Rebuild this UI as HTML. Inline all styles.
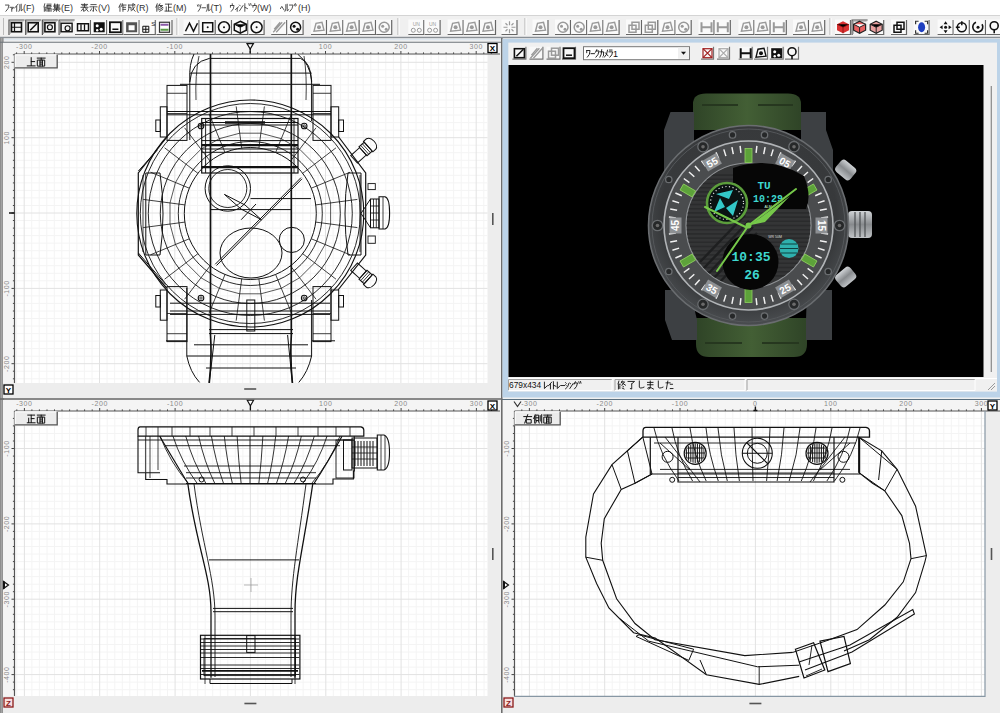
<!DOCTYPE html><html><head><meta charset="utf-8"><style>
html,body{margin:0;padding:0;width:1000px;height:713px;overflow:hidden;background:#f0f0f0;font-family:"Liberation Sans", sans-serif;}
.abs{position:absolute}
</style></head><body>
<div class="abs" style="left:0;top:0;width:1000px;height:713px;overflow:hidden">

<div class="abs" style="left:0;top:0;width:1000px;height:15px;background:#fff"></div>
<svg class="abs" style="left:0;top:0" width="1000" height="713">
<rect x="0" y="15" width="1000" height="22" fill="#f0f0f0"/>
<path d="M0.5 2.5H4.5Q4 7 1 9.5" transform="translate(5.00 2.80) scale(0.900)" stroke="#333" stroke-width="0.94" fill="none" stroke-linecap="round" stroke-linejoin="round"/><path d="M0.5 5H4.5L3 7 M2.5 6V9.5" transform="translate(9.50 2.80) scale(0.900)" stroke="#333" stroke-width="0.94" fill="none" stroke-linecap="round" stroke-linejoin="round"/><path d="M4.5 1.5L0.5 6 M3 4V9.5" transform="translate(14.00 2.80) scale(0.900)" stroke="#333" stroke-width="0.94" fill="none" stroke-linecap="round" stroke-linejoin="round"/><path d="M1.5 2V6Q1.5 8 0.5 9.5 M3 1.5V9L4.8 7.5" transform="translate(18.50 2.80) scale(0.900)" stroke="#333" stroke-width="0.94" fill="none" stroke-linecap="round" stroke-linejoin="round"/><text x="23.00" y="10.72" font-size="9" fill="#333" font-family='"Liberation Sans", sans-serif'>(F)</text>
<path d="M2 1L1 5H3.5 M1.5 6V9.5 M3 6.5V9 M4.5 1.5H9 M4.5 3H9V4.5H4.5 M4.5 3V9.5 M4.5 6H9V9.5 M6 6V9.5 M7.5 6V9.5" transform="translate(43.00 2.80) scale(0.900)" stroke="#333" stroke-width="0.94" fill="none" stroke-linecap="round" stroke-linejoin="round"/><path d="M3 1L2 4 M3 2.5V6 M3 2.5H8.5 M3 3.7H8 M3 4.9H8 M3 6H9 M1 7.2H9 M5 6V9.5 M5 7.2L1.5 9.5 M5 7.2L8.5 9.5 M6 1.5V6" transform="translate(52.00 2.80) scale(0.900)" stroke="#333" stroke-width="0.94" fill="none" stroke-linecap="round" stroke-linejoin="round"/><text x="61.00" y="10.72" font-size="9" fill="#333" font-family='"Liberation Sans", sans-serif'>(E)</text>
<path d="M1.5 1.8H8.5 M5 1V5 M2.5 3.3H7.5 M1 5H9 M4.5 5L1.5 9 M4 7V9.5L6 8.5 M5.5 5L9 9.5 M8 6.5L6.5 7.5" transform="translate(80.00 2.80) scale(0.900)" stroke="#333" stroke-width="0.94" fill="none" stroke-linecap="round" stroke-linejoin="round"/><path d="M2 2H8 M1 4.5H9 M5 4.5V9.5L4 9 M3 6.5L1.5 9 M7 6.5L8.5 9" transform="translate(89.00 2.80) scale(0.900)" stroke="#333" stroke-width="0.94" fill="none" stroke-linecap="round" stroke-linejoin="round"/><text x="98.00" y="10.72" font-size="9" fill="#333" font-family='"Liberation Sans", sans-serif'>(V)</text>
<path d="M3 1L1 5 M2.2 3.5V9.5 M5 1L4 4 M4.5 2.5H9 M5.5 2.5V9.5 M5.5 5H8.5 M5.5 7.3H8.5" transform="translate(118.00 2.80) scale(0.900)" stroke="#333" stroke-width="0.94" fill="none" stroke-linecap="round" stroke-linejoin="round"/><path d="M1.5 2.5H9 M2 2.5V6Q2 8.5 1 9.5 M2 5H4.5V8 M6.5 1V5Q7 8 9 9.5 M8.5 4.5L5 9 M7.5 1.2L8.5 2" transform="translate(127.00 2.80) scale(0.900)" stroke="#333" stroke-width="0.94" fill="none" stroke-linecap="round" stroke-linejoin="round"/><text x="136.00" y="10.72" font-size="9" fill="#333" font-family='"Liberation Sans", sans-serif'>(R)</text>
<path d="M2.5 1L1 5 M2 3.5V9.5 M3.5 2.5V8 M5.5 1L4.5 3H8.5L5 5.5 M5.5 3.5L9 5.5 M8 6L5 7.5 M8.5 7.5L5 9.5" transform="translate(155.00 2.80) scale(0.900)" stroke="#333" stroke-width="0.94" fill="none" stroke-linecap="round" stroke-linejoin="round"/><path d="M1.5 1.5H8.5 M5 1.5V9 M5 5H8 M2.5 4.5V9 M1 9.2H9" transform="translate(164.00 2.80) scale(0.900)" stroke="#333" stroke-width="0.94" fill="none" stroke-linecap="round" stroke-linejoin="round"/><text x="173.00" y="10.72" font-size="9" fill="#333" font-family='"Liberation Sans", sans-serif'>(M)</text>
<path d="M0.5 2.5L1 4 M2 2L2.5 3.5 M4.5 2Q4 7 1.5 9.5" transform="translate(197.00 2.80) scale(0.900)" stroke="#333" stroke-width="0.94" fill="none" stroke-linecap="round" stroke-linejoin="round"/><path d="M0.5 5.5H4.5" transform="translate(201.50 2.80) scale(0.900)" stroke="#333" stroke-width="0.94" fill="none" stroke-linecap="round" stroke-linejoin="round"/><path d="M1.5 2V6Q1.5 8 0.5 9.5 M3 1.5V9L4.8 7.5" transform="translate(206.00 2.80) scale(0.900)" stroke="#333" stroke-width="0.94" fill="none" stroke-linecap="round" stroke-linejoin="round"/><text x="210.50" y="10.72" font-size="9" fill="#333" font-family='"Liberation Sans", sans-serif'>(T)</text>
<path d="M2.5 1V3 M0.5 3V5 M0.5 3H4.5Q4.5 7 1.5 9.5" transform="translate(230.00 2.80) scale(0.900)" stroke="#333" stroke-width="0.94" fill="none" stroke-linecap="round" stroke-linejoin="round"/><path d="M4.5 4.5L1 7.5 M3 6V9.5" transform="translate(234.50 2.80) scale(0.900)" stroke="#333" stroke-width="0.94" fill="none" stroke-linecap="round" stroke-linejoin="round"/><path d="M0.5 2.5L1.5 3.5 M0.5 9L4.5 3" transform="translate(239.00 2.80) scale(0.900)" stroke="#333" stroke-width="0.94" fill="none" stroke-linecap="round" stroke-linejoin="round"/><path d="M1.5 1V9.5 M1.5 5L4.5 6.5" transform="translate(243.50 2.80) scale(0.900)" stroke="#333" stroke-width="0.94" fill="none" stroke-linecap="round" stroke-linejoin="round"/><path d="M1 1L1.5 3 M3 0.8L3.5 2.8" transform="translate(248.00 2.80) scale(0.900)" stroke="#333" stroke-width="0.94" fill="none" stroke-linecap="round" stroke-linejoin="round"/><path d="M2.5 1V3 M0.5 3V5 M0.5 3H4.5Q4.5 7 1.5 9.5" transform="translate(252.50 2.80) scale(0.900)" stroke="#333" stroke-width="0.94" fill="none" stroke-linecap="round" stroke-linejoin="round"/><text x="257.00" y="10.72" font-size="9" fill="#333" font-family='"Liberation Sans", sans-serif'>(W)</text>
<path d="M0.5 6.5L2 4L4.5 8" transform="translate(280.00 2.80) scale(0.900)" stroke="#333" stroke-width="0.94" fill="none" stroke-linecap="round" stroke-linejoin="round"/><path d="M1.5 2V6Q1.5 8 0.5 9.5 M3 1.5V9L4.8 7.5" transform="translate(284.50 2.80) scale(0.900)" stroke="#333" stroke-width="0.94" fill="none" stroke-linecap="round" stroke-linejoin="round"/><path d="M0.5 2.5H4.5Q4 7 1 9.5" transform="translate(289.00 2.80) scale(0.900)" stroke="#333" stroke-width="0.94" fill="none" stroke-linecap="round" stroke-linejoin="round"/><path d="M2 1.2a1.2 1.2 0 1 0 0.01 0" transform="translate(293.50 2.80) scale(0.900)" stroke="#333" stroke-width="0.94" fill="none" stroke-linecap="round" stroke-linejoin="round"/><text x="298.00" y="10.72" font-size="9" fill="#333" font-family='"Liberation Sans", sans-serif'>(H)</text>
<path d="M0 15.5H1000" stroke="#d4d4d4"/>
<path d="M0 37.5H1000" stroke="#8a9096" stroke-width="1.6"/>
<path d="M0 39.5H1000" stroke="#dfe8f0" stroke-width="1.5"/>
<rect x="0" y="38" width="3.6" height="675" fill="#8e8e8e"/>
<rect x="1.2" y="38" width="1" height="675" fill="#a8a8a8"/>
<rect x="3" y="42.5" width="497" height="355.5" fill="#ededed"/>
<rect x="3" y="42.5" width="497" height="11.5" fill="#f4f4f4"/>
<rect x="3" y="42.5" width="11.5" height="340.5" fill="#f4f4f4"/>
<rect x="14.5" y="54" width="473.0" height="329" fill="#fff"/>
<path d="M16.6 54V383M31.7 54V383M39.2 54V383M46.8 54V383M54.3 54V383M61.8 54V383M69.4 54V383M76.9 54V383M84.4 54V383M92.0 54V383M107.0 54V383M114.6 54V383M122.1 54V383M129.6 54V383M137.2 54V383M144.7 54V383M152.2 54V383M159.8 54V383M167.3 54V383M182.4 54V383M189.9 54V383M197.5 54V383M205.0 54V383M212.5 54V383M220.1 54V383M227.6 54V383M235.1 54V383M242.7 54V383M257.7 54V383M265.3 54V383M272.8 54V383M280.3 54V383M287.9 54V383M295.4 54V383M302.9 54V383M310.5 54V383M318.0 54V383M333.1 54V383M340.6 54V383M348.2 54V383M355.7 54V383M363.2 54V383M370.8 54V383M378.3 54V383M385.8 54V383M393.4 54V383M408.4 54V383M416.0 54V383M423.5 54V383M431.0 54V383M438.6 54V383M446.1 54V383M453.6 54V383M461.2 54V383M468.7 54V383M483.8 54V383M14.5 54.8H487.5M14.5 69.8H487.5M14.5 77.4H487.5M14.5 84.9H487.5M14.5 92.4H487.5M14.5 100.0H487.5M14.5 107.5H487.5M14.5 115.0H487.5M14.5 122.6H487.5M14.5 130.1H487.5M14.5 145.2H487.5M14.5 152.7H487.5M14.5 160.3H487.5M14.5 167.8H487.5M14.5 175.3H487.5M14.5 182.9H487.5M14.5 190.4H487.5M14.5 197.9H487.5M14.5 205.5H487.5M14.5 220.5H487.5M14.5 228.1H487.5M14.5 235.6H487.5M14.5 243.1H487.5M14.5 250.7H487.5M14.5 258.2H487.5M14.5 265.7H487.5M14.5 273.3H487.5M14.5 280.8H487.5M14.5 295.9H487.5M14.5 303.4H487.5M14.5 311.0H487.5M14.5 318.5H487.5M14.5 326.0H487.5M14.5 333.6H487.5M14.5 341.1H487.5M14.5 348.6H487.5M14.5 356.2H487.5M14.5 371.2H487.5M14.5 378.8H487.5" stroke="#f4f4f4" stroke-width="1" fill="none"/>
<path d="M24.2 54V383M99.5 54V383M174.8 54V383M250.2 54V383M325.5 54V383M400.9 54V383M476.2 54V383M14.5 62.3H487.5M14.5 137.7H487.5M14.5 213.0H487.5M14.5 288.4H487.5M14.5 363.7H487.5" stroke="#e2e2e2" stroke-width="1" fill="none"/>
<text x="24.2" y="48.8" font-size="7" letter-spacing="0.6" fill="#8a8a8a" text-anchor="middle" font-family='"Liberation Sans", sans-serif'>-300</text>
<text x="99.5" y="48.8" font-size="7" letter-spacing="0.6" fill="#8a8a8a" text-anchor="middle" font-family='"Liberation Sans", sans-serif'>-200</text>
<text x="174.8" y="48.8" font-size="7" letter-spacing="0.6" fill="#8a8a8a" text-anchor="middle" font-family='"Liberation Sans", sans-serif'>-100</text>
<text x="325.5" y="48.8" font-size="7" letter-spacing="0.6" fill="#8a8a8a" text-anchor="middle" font-family='"Liberation Sans", sans-serif'>100</text>
<text x="400.9" y="48.8" font-size="7" letter-spacing="0.6" fill="#8a8a8a" text-anchor="middle" font-family='"Liberation Sans", sans-serif'>200</text>
<text x="476.2" y="48.8" font-size="7" letter-spacing="0.6" fill="#8a8a8a" text-anchor="middle" font-family='"Liberation Sans", sans-serif'>300</text>
<text x="9.0" y="62.3" font-size="7" letter-spacing="0.6" fill="#8a8a8a" text-anchor="middle" font-family='"Liberation Sans", sans-serif' transform="rotate(-90 9.0 62.3)">200</text>
<text x="9.0" y="137.7" font-size="7" letter-spacing="0.6" fill="#8a8a8a" text-anchor="middle" font-family='"Liberation Sans", sans-serif' transform="rotate(-90 9.0 137.7)">100</text>
<text x="9.0" y="288.4" font-size="7" letter-spacing="0.6" fill="#8a8a8a" text-anchor="middle" font-family='"Liberation Sans", sans-serif' transform="rotate(-90 9.0 288.4)">-100</text>
<text x="9.0" y="363.7" font-size="7" letter-spacing="0.6" fill="#8a8a8a" text-anchor="middle" font-family='"Liberation Sans", sans-serif' transform="rotate(-90 9.0 363.7)">-200</text>
<path d="M16.6 52.4V54M24.2 51.0V54M31.7 52.4V54M39.2 52.4V54M46.8 52.4V54M54.3 52.4V54M61.8 52.4V54M69.4 52.4V54M76.9 52.4V54M84.4 52.4V54M92.0 52.4V54M99.5 51.0V54M107.0 52.4V54M114.6 52.4V54M122.1 52.4V54M129.6 52.4V54M137.2 52.4V54M144.7 52.4V54M152.2 52.4V54M159.8 52.4V54M167.3 52.4V54M174.8 51.0V54M182.4 52.4V54M189.9 52.4V54M197.5 52.4V54M205.0 52.4V54M212.5 52.4V54M220.1 52.4V54M227.6 52.4V54M235.1 52.4V54M242.7 52.4V54M250.2 51.0V54M257.7 52.4V54M265.3 52.4V54M272.8 52.4V54M280.3 52.4V54M287.9 52.4V54M295.4 52.4V54M302.9 52.4V54M310.5 52.4V54M318.0 52.4V54M325.5 51.0V54M333.1 52.4V54M340.6 52.4V54M348.2 52.4V54M355.7 52.4V54M363.2 52.4V54M370.8 52.4V54M378.3 52.4V54M385.8 52.4V54M393.4 52.4V54M400.9 51.0V54M408.4 52.4V54M416.0 52.4V54M423.5 52.4V54M431.0 52.4V54M438.6 52.4V54M446.1 52.4V54M453.6 52.4V54M461.2 52.4V54M468.7 52.4V54M476.2 51.0V54M483.8 52.4V54M491.3 52.4V54M12.9 54.8H14.5M11.5 62.3H14.5M12.9 69.8H14.5M12.9 77.4H14.5M12.9 84.9H14.5M12.9 92.4H14.5M12.9 100.0H14.5M12.9 107.5H14.5M12.9 115.0H14.5M12.9 122.6H14.5M12.9 130.1H14.5M11.5 137.7H14.5M12.9 145.2H14.5M12.9 152.7H14.5M12.9 160.3H14.5M12.9 167.8H14.5M12.9 175.3H14.5M12.9 182.9H14.5M12.9 190.4H14.5M12.9 197.9H14.5M12.9 205.5H14.5M11.5 213.0H14.5M12.9 220.5H14.5M12.9 228.1H14.5M12.9 235.6H14.5M12.9 243.1H14.5M12.9 250.7H14.5M12.9 258.2H14.5M12.9 265.7H14.5M12.9 273.3H14.5M12.9 280.8H14.5M11.5 288.4H14.5M12.9 295.9H14.5M12.9 303.4H14.5M12.9 311.0H14.5M12.9 318.5H14.5M12.9 326.0H14.5M12.9 333.6H14.5M12.9 341.1H14.5M12.9 348.6H14.5M12.9 356.2H14.5M11.5 363.7H14.5M12.9 371.2H14.5M12.9 378.8H14.5" stroke="#444" stroke-width="1" fill="none"/>
<path d="M14.5 54H500M14.5 54V383" stroke="#555" stroke-width="1.2" fill="none"/>
<path d="M244.2 389H256.2" stroke="#555" stroke-width="1.6"/>
<path d="M492.8 213v12" stroke="#555" stroke-width="1.6"/>
<rect x="14.7" y="54.4" width="43" height="14" fill="#ececec"/><path d="M15.2 68.4V54.9H57.7" stroke="#fff" fill="none"/><path d="M14.7 67.9H57.2V54.4" stroke="#555" stroke-width="1.3" fill="none"/><path d="M5 1V9 M5 5H8.5 M1 9.3H9" transform="translate(26.20 56.60) scale(1.000)" stroke="#111" stroke-width="1.00" fill="none" stroke-linecap="round" stroke-linejoin="round"/><path d="M1 1.5H9 M5 1.5V3.5 M1.5 3.5H8.5V9.5H1.5Z M3.8 3.5V9.5 M6.2 3.5V9.5 M3.8 5.5H6.2 M3.8 7.5H6.2" transform="translate(36.20 56.60) scale(1.000)" stroke="#111" stroke-width="1.00" fill="none" stroke-linecap="round" stroke-linejoin="round"/>
<rect x="4.0" y="385.0" width="9" height="9" fill="#fff" stroke="#000" stroke-width="1.3"/><text x="8.5" y="392.5" font-size="8" font-weight="bold" fill="#000" text-anchor="middle" font-family='"Liberation Sans", sans-serif'>Y</text>
<rect x="488.0" y="43.5" width="9" height="9" fill="#fff" stroke="#000" stroke-width="1.3"/><text x="492.5" y="51.0" font-size="8" font-weight="bold" fill="#000" text-anchor="middle" font-family='"Liberation Sans", sans-serif'>X</text>
<rect x="3" y="400" width="497" height="313" fill="#ededed"/>
<rect x="3" y="400" width="497" height="11" fill="#f4f4f4"/>
<rect x="3" y="400" width="11.5" height="296" fill="#f4f4f4"/>
<rect x="14.5" y="411" width="473.0" height="285" fill="#fff"/>
<path d="M16.8 411V696M31.9 411V696M39.4 411V696M47.0 411V696M54.5 411V696M62.0 411V696M69.6 411V696M77.1 411V696M84.6 411V696M92.2 411V696M107.2 411V696M114.8 411V696M122.3 411V696M129.8 411V696M137.4 411V696M144.9 411V696M152.4 411V696M160.0 411V696M167.5 411V696M182.6 411V696M190.1 411V696M197.7 411V696M205.2 411V696M212.7 411V696M220.3 411V696M227.8 411V696M235.3 411V696M242.9 411V696M257.9 411V696M265.5 411V696M273.0 411V696M280.5 411V696M288.1 411V696M295.6 411V696M303.1 411V696M310.7 411V696M318.2 411V696M333.3 411V696M340.8 411V696M348.4 411V696M355.9 411V696M363.4 411V696M371.0 411V696M378.5 411V696M386.0 411V696M393.6 411V696M408.6 411V696M416.2 411V696M423.7 411V696M431.2 411V696M438.8 411V696M446.3 411V696M453.8 411V696M461.4 411V696M468.9 411V696M484.0 411V696M14.5 418.4H487.5M14.5 425.9H487.5M14.5 433.5H487.5M14.5 441.0H487.5M14.5 456.1H487.5M14.5 463.6H487.5M14.5 471.2H487.5M14.5 478.7H487.5M14.5 486.2H487.5M14.5 493.8H487.5M14.5 501.3H487.5M14.5 508.8H487.5M14.5 516.4H487.5M14.5 531.4H487.5M14.5 539.0H487.5M14.5 546.5H487.5M14.5 554.0H487.5M14.5 561.6H487.5M14.5 569.1H487.5M14.5 576.6H487.5M14.5 584.2H487.5M14.5 591.7H487.5M14.5 606.8H487.5M14.5 614.3H487.5M14.5 621.9H487.5M14.5 629.4H487.5M14.5 636.9H487.5M14.5 644.5H487.5M14.5 652.0H487.5M14.5 659.5H487.5M14.5 667.1H487.5M14.5 682.1H487.5M14.5 689.7H487.5" stroke="#f4f4f4" stroke-width="1" fill="none"/>
<path d="M24.4 411V696M99.7 411V696M175.1 411V696M250.4 411V696M325.8 411V696M401.1 411V696M476.4 411V696M14.5 448.5H487.5M14.5 523.9H487.5M14.5 599.2H487.5M14.5 674.6H487.5" stroke="#e2e2e2" stroke-width="1" fill="none"/>
<text x="24.4" y="405.8" font-size="7" letter-spacing="0.6" fill="#8a8a8a" text-anchor="middle" font-family='"Liberation Sans", sans-serif'>-300</text>
<text x="99.7" y="405.8" font-size="7" letter-spacing="0.6" fill="#8a8a8a" text-anchor="middle" font-family='"Liberation Sans", sans-serif'>-200</text>
<text x="175.1" y="405.8" font-size="7" letter-spacing="0.6" fill="#8a8a8a" text-anchor="middle" font-family='"Liberation Sans", sans-serif'>-100</text>
<text x="325.8" y="405.8" font-size="7" letter-spacing="0.6" fill="#8a8a8a" text-anchor="middle" font-family='"Liberation Sans", sans-serif'>100</text>
<text x="401.1" y="405.8" font-size="7" letter-spacing="0.6" fill="#8a8a8a" text-anchor="middle" font-family='"Liberation Sans", sans-serif'>200</text>
<text x="476.4" y="405.8" font-size="7" letter-spacing="0.6" fill="#8a8a8a" text-anchor="middle" font-family='"Liberation Sans", sans-serif'>300</text>
<text x="9.0" y="448.5" font-size="7" letter-spacing="0.6" fill="#8a8a8a" text-anchor="middle" font-family='"Liberation Sans", sans-serif' transform="rotate(-90 9.0 448.5)">-100</text>
<text x="9.0" y="523.9" font-size="7" letter-spacing="0.6" fill="#8a8a8a" text-anchor="middle" font-family='"Liberation Sans", sans-serif' transform="rotate(-90 9.0 523.9)">-200</text>
<text x="9.0" y="599.2" font-size="7" letter-spacing="0.6" fill="#8a8a8a" text-anchor="middle" font-family='"Liberation Sans", sans-serif' transform="rotate(-90 9.0 599.2)">-300</text>
<text x="9.0" y="674.6" font-size="7" letter-spacing="0.6" fill="#8a8a8a" text-anchor="middle" font-family='"Liberation Sans", sans-serif' transform="rotate(-90 9.0 674.6)">-400</text>
<path d="M16.8 409.4V411M24.4 408.0V411M31.9 409.4V411M39.4 409.4V411M47.0 409.4V411M54.5 409.4V411M62.0 409.4V411M69.6 409.4V411M77.1 409.4V411M84.6 409.4V411M92.2 409.4V411M99.7 408.0V411M107.2 409.4V411M114.8 409.4V411M122.3 409.4V411M129.8 409.4V411M137.4 409.4V411M144.9 409.4V411M152.4 409.4V411M160.0 409.4V411M167.5 409.4V411M175.1 408.0V411M182.6 409.4V411M190.1 409.4V411M197.7 409.4V411M205.2 409.4V411M212.7 409.4V411M220.3 409.4V411M227.8 409.4V411M235.3 409.4V411M242.9 409.4V411M250.4 408.0V411M257.9 409.4V411M265.5 409.4V411M273.0 409.4V411M280.5 409.4V411M288.1 409.4V411M295.6 409.4V411M303.1 409.4V411M310.7 409.4V411M318.2 409.4V411M325.8 408.0V411M333.3 409.4V411M340.8 409.4V411M348.4 409.4V411M355.9 409.4V411M363.4 409.4V411M371.0 409.4V411M378.5 409.4V411M386.0 409.4V411M393.6 409.4V411M401.1 408.0V411M408.6 409.4V411M416.2 409.4V411M423.7 409.4V411M431.2 409.4V411M438.8 409.4V411M446.3 409.4V411M453.8 409.4V411M461.4 409.4V411M468.9 409.4V411M476.4 408.0V411M484.0 409.4V411M491.5 409.4V411M12.9 418.4H14.5M12.9 425.9H14.5M12.9 433.5H14.5M12.9 441.0H14.5M11.5 448.5H14.5M12.9 456.1H14.5M12.9 463.6H14.5M12.9 471.2H14.5M12.9 478.7H14.5M12.9 486.2H14.5M12.9 493.8H14.5M12.9 501.3H14.5M12.9 508.8H14.5M12.9 516.4H14.5M11.5 523.9H14.5M12.9 531.4H14.5M12.9 539.0H14.5M12.9 546.5H14.5M12.9 554.0H14.5M12.9 561.6H14.5M12.9 569.1H14.5M12.9 576.6H14.5M12.9 584.2H14.5M12.9 591.7H14.5M11.5 599.2H14.5M12.9 606.8H14.5M12.9 614.3H14.5M12.9 621.9H14.5M12.9 629.4H14.5M12.9 636.9H14.5M12.9 644.5H14.5M12.9 652.0H14.5M12.9 659.5H14.5M12.9 667.1H14.5M11.5 674.6H14.5M12.9 682.1H14.5M12.9 689.7H14.5" stroke="#444" stroke-width="1" fill="none"/>
<path d="M14.5 411H500M14.5 411V696" stroke="#555" stroke-width="1.2" fill="none"/>
<path d="M244.4 703.5H256.4" stroke="#555" stroke-width="1.6"/>
<path d="M492.8 548v12" stroke="#555" stroke-width="1.6"/>
<rect x="14.7" y="411.4" width="43" height="14" fill="#ececec"/><path d="M15.2 425.4V411.9H57.7" stroke="#fff" fill="none"/><path d="M14.7 424.9H57.2V411.4" stroke="#555" stroke-width="1.3" fill="none"/><path d="M1.5 1.5H8.5 M5 1.5V9 M5 5H8 M2.5 4.5V9 M1 9.2H9" transform="translate(26.20 413.60) scale(1.000)" stroke="#111" stroke-width="1.00" fill="none" stroke-linecap="round" stroke-linejoin="round"/><path d="M1 1.5H9 M5 1.5V3.5 M1.5 3.5H8.5V9.5H1.5Z M3.8 3.5V9.5 M6.2 3.5V9.5 M3.8 5.5H6.2 M3.8 7.5H6.2" transform="translate(36.20 413.60) scale(1.000)" stroke="#111" stroke-width="1.00" fill="none" stroke-linecap="round" stroke-linejoin="round"/>
<rect x="4.0" y="698.0" width="9" height="9" fill="#f7dede" stroke="#8b1a1a" stroke-width="1.3"/><text x="8.5" y="705.5" font-size="8" font-weight="bold" fill="#8b1a1a" text-anchor="middle" font-family='"Liberation Sans", sans-serif'>Z</text>
<rect x="488.0" y="401.0" width="9" height="9" fill="#fff" stroke="#000" stroke-width="1.3"/><text x="492.5" y="408.5" font-size="8" font-weight="bold" fill="#000" text-anchor="middle" font-family='"Liberation Sans", sans-serif'>X</text>
<rect x="503" y="400" width="497" height="313" fill="#ededed"/>
<rect x="503" y="400" width="497" height="11" fill="#f4f4f4"/>
<rect x="503" y="400" width="11.5" height="296" fill="#f4f4f4"/>
<rect x="514.5" y="411" width="470.5" height="285" fill="#fff"/>
<path d="M521.8 411V696M536.9 411V696M544.4 411V696M552.0 411V696M559.5 411V696M567.0 411V696M574.6 411V696M582.1 411V696M589.6 411V696M597.2 411V696M612.2 411V696M619.8 411V696M627.3 411V696M634.8 411V696M642.4 411V696M649.9 411V696M657.4 411V696M665.0 411V696M672.5 411V696M687.6 411V696M695.1 411V696M702.7 411V696M710.2 411V696M717.7 411V696M725.3 411V696M732.8 411V696M740.3 411V696M747.9 411V696M762.9 411V696M770.5 411V696M778.0 411V696M785.5 411V696M793.1 411V696M800.6 411V696M808.1 411V696M815.7 411V696M823.2 411V696M838.3 411V696M845.8 411V696M853.4 411V696M860.9 411V696M868.4 411V696M876.0 411V696M883.5 411V696M891.0 411V696M898.6 411V696M913.6 411V696M921.2 411V696M928.7 411V696M936.2 411V696M943.8 411V696M951.3 411V696M958.8 411V696M966.4 411V696M973.9 411V696M514.5 418.4H985M514.5 425.9H985M514.5 433.5H985M514.5 441.0H985M514.5 456.1H985M514.5 463.6H985M514.5 471.2H985M514.5 478.7H985M514.5 486.2H985M514.5 493.8H985M514.5 501.3H985M514.5 508.8H985M514.5 516.4H985M514.5 531.4H985M514.5 539.0H985M514.5 546.5H985M514.5 554.0H985M514.5 561.6H985M514.5 569.1H985M514.5 576.6H985M514.5 584.2H985M514.5 591.7H985M514.5 606.8H985M514.5 614.3H985M514.5 621.9H985M514.5 629.4H985M514.5 636.9H985M514.5 644.5H985M514.5 652.0H985M514.5 659.5H985M514.5 667.1H985M514.5 682.1H985M514.5 689.7H985" stroke="#f4f4f4" stroke-width="1" fill="none"/>
<path d="M529.4 411V696M604.7 411V696M680.0 411V696M755.4 411V696M830.8 411V696M906.1 411V696M981.4 411V696M514.5 448.5H985M514.5 523.9H985M514.5 599.2H985M514.5 674.6H985" stroke="#e2e2e2" stroke-width="1" fill="none"/>
<text x="529.4" y="405.8" font-size="7" letter-spacing="0.6" fill="#8a8a8a" text-anchor="middle" font-family='"Liberation Sans", sans-serif'>-300</text>
<text x="604.7" y="405.8" font-size="7" letter-spacing="0.6" fill="#8a8a8a" text-anchor="middle" font-family='"Liberation Sans", sans-serif'>-200</text>
<text x="680.0" y="405.8" font-size="7" letter-spacing="0.6" fill="#8a8a8a" text-anchor="middle" font-family='"Liberation Sans", sans-serif'>-100</text>
<text x="830.8" y="405.8" font-size="7" letter-spacing="0.6" fill="#8a8a8a" text-anchor="middle" font-family='"Liberation Sans", sans-serif'>100</text>
<text x="906.1" y="405.8" font-size="7" letter-spacing="0.6" fill="#8a8a8a" text-anchor="middle" font-family='"Liberation Sans", sans-serif'>200</text>
<text x="981.4" y="405.8" font-size="7" letter-spacing="0.6" fill="#8a8a8a" text-anchor="middle" font-family='"Liberation Sans", sans-serif'>300</text>
<text x="509.0" y="448.5" font-size="7" letter-spacing="0.6" fill="#8a8a8a" text-anchor="middle" font-family='"Liberation Sans", sans-serif' transform="rotate(-90 509.0 448.5)">-100</text>
<text x="509.0" y="523.9" font-size="7" letter-spacing="0.6" fill="#8a8a8a" text-anchor="middle" font-family='"Liberation Sans", sans-serif' transform="rotate(-90 509.0 523.9)">-200</text>
<text x="509.0" y="599.2" font-size="7" letter-spacing="0.6" fill="#8a8a8a" text-anchor="middle" font-family='"Liberation Sans", sans-serif' transform="rotate(-90 509.0 599.2)">-300</text>
<text x="509.0" y="674.6" font-size="7" letter-spacing="0.6" fill="#8a8a8a" text-anchor="middle" font-family='"Liberation Sans", sans-serif' transform="rotate(-90 509.0 674.6)">-400</text>
<path d="M521.8 409.4V411M529.4 408.0V411M536.9 409.4V411M544.4 409.4V411M552.0 409.4V411M559.5 409.4V411M567.0 409.4V411M574.6 409.4V411M582.1 409.4V411M589.6 409.4V411M597.2 409.4V411M604.7 408.0V411M612.2 409.4V411M619.8 409.4V411M627.3 409.4V411M634.8 409.4V411M642.4 409.4V411M649.9 409.4V411M657.4 409.4V411M665.0 409.4V411M672.5 409.4V411M680.0 408.0V411M687.6 409.4V411M695.1 409.4V411M702.7 409.4V411M710.2 409.4V411M717.7 409.4V411M725.3 409.4V411M732.8 409.4V411M740.3 409.4V411M747.9 409.4V411M755.4 408.0V411M762.9 409.4V411M770.5 409.4V411M778.0 409.4V411M785.5 409.4V411M793.1 409.4V411M800.6 409.4V411M808.1 409.4V411M815.7 409.4V411M823.2 409.4V411M830.8 408.0V411M838.3 409.4V411M845.8 409.4V411M853.4 409.4V411M860.9 409.4V411M868.4 409.4V411M876.0 409.4V411M883.5 409.4V411M891.0 409.4V411M898.6 409.4V411M906.1 408.0V411M913.6 409.4V411M921.2 409.4V411M928.7 409.4V411M936.2 409.4V411M943.8 409.4V411M951.3 409.4V411M958.8 409.4V411M966.4 409.4V411M973.9 409.4V411M981.4 408.0V411M989.0 409.4V411M512.9 418.4H514.5M512.9 425.9H514.5M512.9 433.5H514.5M512.9 441.0H514.5M511.5 448.5H514.5M512.9 456.1H514.5M512.9 463.6H514.5M512.9 471.2H514.5M512.9 478.7H514.5M512.9 486.2H514.5M512.9 493.8H514.5M512.9 501.3H514.5M512.9 508.8H514.5M512.9 516.4H514.5M511.5 523.9H514.5M512.9 531.4H514.5M512.9 539.0H514.5M512.9 546.5H514.5M512.9 554.0H514.5M512.9 561.6H514.5M512.9 569.1H514.5M512.9 576.6H514.5M512.9 584.2H514.5M512.9 591.7H514.5M511.5 599.2H514.5M512.9 606.8H514.5M512.9 614.3H514.5M512.9 621.9H514.5M512.9 629.4H514.5M512.9 636.9H514.5M512.9 644.5H514.5M512.9 652.0H514.5M512.9 659.5H514.5M512.9 667.1H514.5M511.5 674.6H514.5M512.9 682.1H514.5M512.9 689.7H514.5" stroke="#444" stroke-width="1" fill="none"/>
<path d="M514.5 411H1000M514.5 411V696" stroke="#555" stroke-width="1.2" fill="none"/>
<path d="M749.4 703.5H761.4" stroke="#555" stroke-width="1.6"/>
<path d="M991.5 548v12" stroke="#555" stroke-width="1.6"/>
<rect x="514.7" y="411.4" width="46" height="14" fill="#ececec"/><path d="M515.2 425.4V411.9H560.7" stroke="#fff" fill="none"/><path d="M514.7 424.9H560.2V411.4" stroke="#555" stroke-width="1.3" fill="none"/><path d="M1 3H9 M5 1L2 9.5 M4 6H8.5V9.5H4Z" transform="translate(522.70 413.60) scale(1.000)" stroke="#111" stroke-width="1.00" fill="none" stroke-linecap="round" stroke-linejoin="round"/><path d="M2.5 1L1 5 M2 3.5V9.5 M3.5 1.5H6V7H3.5Z M3.5 4.2H6 M3.8 7L3 9.5 M5.7 7L6.5 9.5 M7.5 2V7.5 M9 1V9.5" transform="translate(532.70 413.60) scale(1.000)" stroke="#111" stroke-width="1.00" fill="none" stroke-linecap="round" stroke-linejoin="round"/><path d="M1 1.5H9 M5 1.5V3.5 M1.5 3.5H8.5V9.5H1.5Z M3.8 3.5V9.5 M6.2 3.5V9.5 M3.8 5.5H6.2 M3.8 7.5H6.2" transform="translate(542.70 413.60) scale(1.000)" stroke="#111" stroke-width="1.00" fill="none" stroke-linecap="round" stroke-linejoin="round"/>
<rect x="504.0" y="698.0" width="9" height="9" fill="#f7dede" stroke="#8b1a1a" stroke-width="1.3"/><text x="508.5" y="705.5" font-size="8" font-weight="bold" fill="#8b1a1a" text-anchor="middle" font-family='"Liberation Sans", sans-serif'>Z</text>
<rect x="988.0" y="401.0" width="9" height="9" fill="#fff" stroke="#000" stroke-width="1.3"/><text x="992.5" y="408.5" font-size="8" font-weight="bold" fill="#000" text-anchor="middle" font-family='"Liberation Sans", sans-serif'>Y</text>
<path d="M247.0 43.6H253.39999999999998L250.2 49.1Z" fill="#fff" stroke="#111" stroke-width="1.2"/><path d="M250.2 49.1V53.6" stroke="#111" stroke-width="1.3"/>
<path d="M247.20000000000002 400.2H253.6L250.4 405.7Z" fill="#fff" stroke="#111" stroke-width="1.2"/><path d="M250.4 405.7V410.2" stroke="#111" stroke-width="1.3"/>
<path d="M755.4 406.5V410.5M753.4 410.5H757.4" stroke="#111" stroke-width="1.4"/>
<text x="755" y="406" font-size="7" fill="#8a8a8a" text-anchor="middle" font-family='"Liberation Sans", sans-serif'>0</text>
<path d="M514 401.5L517.5 406.5L521 401.5" stroke="#333" stroke-width="1.2" fill="none"/>
<path d="M3.5 581.5V588.5L8.5 585Z" fill="#fff" stroke="#111" stroke-width="1.2"/><path d="M4.0 581.5V588.5" stroke="#111" stroke-width="2"/>
<path d="M503.5 581.5V588.5L508.5 585Z" fill="#fff" stroke="#111" stroke-width="1.2"/><path d="M504.0 581.5V588.5" stroke="#111" stroke-width="2"/>
<path d="M9 213H14.5" stroke="#111" stroke-width="1.5"/>
<path d="M0 42.2H501.5" stroke="#6e747a" stroke-width="1.1"/>
<path d="M0 398.9H501" stroke="#666" stroke-width="1.5"/>
<path d="M502 399.5H1000" stroke="#5a7080" stroke-width="1"/>
<path d="M501.8 38V713" stroke="#666" stroke-width="1.5"/>
<path d="M985 411V696.4H514" stroke="#8797a4" stroke-width="1.2" fill="none"/>
<rect x="502.5" y="39" width="497.5" height="358.5" fill="#bcd3e8"/>
<rect x="508.3" y="42.6" width="488.7" height="348.6" fill="#f0f0f0"/>
<rect x="508.5" y="65" width="475" height="312" fill="#000"/>
<path d="M991.3 86V372" stroke="#888" stroke-width="1.2"/>
<path d="M3.5 18V35" stroke="#bbb" stroke-width="1"/><rect x="8.5" y="19.5" width="16" height="15.5" fill="#f4f4f4"/><path d="M9.0 35.0V20.0H24.5" stroke="#555" stroke-width="1.2" fill="none"/><path d="M10.0 34.0V21.0H23.5" stroke="#999" stroke-width="1" fill="none"/><rect x="11.5" y="22.75" width="10" height="9" fill="none" stroke="#111" stroke-width="1.6"/><path d="M11.5 27.25H21.5M14.5 22.75V31.75" stroke="#111" stroke-width="1.2"/><rect x="25.2" y="19.5" width="16" height="15.5" fill="#f4f4f4"/><path d="M25.7 35.0V20.0H41.2" stroke="#555" stroke-width="1.2" fill="none"/><path d="M26.7 34.0V21.0H40.2" stroke="#999" stroke-width="1" fill="none"/><rect x="28.200000000000003" y="22.75" width="10" height="9" fill="none" stroke="#111" stroke-width="1.6"/><path d="M30.200000000000003 30.25L37.2 23.25" stroke="#111" stroke-width="1.5"/><rect x="41.9" y="19.5" width="16" height="15.5" fill="#f4f4f4"/><path d="M42.4 35.0V20.0H57.9" stroke="#555" stroke-width="1.2" fill="none"/><path d="M43.4 34.0V21.0H56.9" stroke="#999" stroke-width="1" fill="none"/><rect x="44.9" y="22.75" width="10" height="9" fill="none" stroke="#111" stroke-width="1.6"/><circle cx="49.9" cy="27.25" r="2.5" fill="none" stroke="#111" stroke-width="1.2"/><rect x="58.6" y="19.5" width="16" height="15.5" fill="#f4f4f4"/><path d="M59.1 35.0V20.0H74.6" stroke="#555" stroke-width="1.2" fill="none"/><path d="M60.1 34.0V21.0H73.6" stroke="#999" stroke-width="1" fill="none"/><rect x="61.099999999999994" y="23.25" width="11" height="8.5" fill="none" stroke="#111" stroke-width="1.4"/><circle cx="67.6" cy="28.25" r="2.5" fill="none" stroke="#111" stroke-width="1.2"/><rect x="75" y="19.5" width="16" height="15.5" fill="#fafafa"/><path d="M90.5 20.0V34.5H75" stroke="#666" stroke-width="1.2" fill="none"/><rect x="77.5" y="23.75" width="11" height="7" fill="none" stroke="#111" stroke-width="1.5"/><path d="M81.0 24.25V30.25M84.5 24.25V30.25" stroke="#111" stroke-width="1.3"/><rect x="91.2" y="19.5" width="16" height="15.5" fill="#fafafa"/><path d="M106.7 20.0V34.5H91.2" stroke="#666" stroke-width="1.2" fill="none"/><rect x="93.7" y="22.25" width="11" height="10" fill="#111"/><circle cx="97.2" cy="25.75" r="1.5" fill="#fff"/><circle cx="101.2" cy="29.25" r="1.5" fill="#fff"/><circle cx="97.2" cy="30.25" r="1.2" fill="#fff"/><rect x="107.4" y="19.5" width="16" height="15.5" fill="#fafafa"/><path d="M122.9 20.0V34.5H107.4" stroke="#666" stroke-width="1.2" fill="none"/><rect x="109.9" y="22.25" width="11" height="10" fill="none" stroke="#111" stroke-width="1.8"/><path d="M112.4 29.25H118.4" stroke="#111" stroke-width="1.5"/><rect x="123.6" y="19.5" width="16" height="15.5" fill="#fafafa"/><path d="M139.1 20.0V34.5H123.6" stroke="#666" stroke-width="1.2" fill="none"/><rect x="126.1" y="22.25" width="11" height="10" fill="#555"/><rect x="128.6" y="25.25" width="6" height="5" fill="#fff"/><rect x="139.8" y="19.5" width="16" height="15.5" fill="#fafafa"/><path d="M155.3 20.0V34.5H139.8" stroke="#666" stroke-width="1.2" fill="none"/><path d="M142.8 26.25h6v6h-6zM142.8 29.25h6M145.8 26.25v6" stroke="#111" stroke-width="1" fill="none"/><text x="151.3" y="26.25" font-size="6" fill="#111" font-family='"Liberation Sans", sans-serif'>S</text><rect x="156.5" y="19.5" width="16" height="15.5" fill="#fafafa"/><path d="M172.0 20.0V34.5H156.5" stroke="#666" stroke-width="1.2" fill="none"/><rect x="159.5" y="22.25" width="10" height="10" fill="#fff" stroke="#333" stroke-width="1.2"/><rect x="160.5" y="23.75" width="8" height="2" fill="#8a5aa8"/><rect x="160.5" y="28.75" width="8" height="2" fill="#5a9a48"/><rect x="183.5" y="19.5" width="16" height="15.5" fill="#fafafa"/><path d="M199.0 20.0V34.5H183.5" stroke="#666" stroke-width="1.2" fill="none"/><path d="M185.5 31.25L189.5 23.25L193.5 31.25L197.5 23.25" stroke="#111" stroke-width="1.5" fill="none"/><rect x="199.7" y="19.5" width="16" height="15.5" fill="#fafafa"/><path d="M215.2 20.0V34.5H199.7" stroke="#666" stroke-width="1.2" fill="none"/><rect x="202.7" y="22.75" width="10" height="9" fill="none" stroke="#111" stroke-width="1.5"/><circle cx="207.7" cy="27.25" r="1" fill="#111"/><rect x="216" y="19.5" width="16" height="15.5" fill="#fafafa"/><path d="M231.5 20.0V34.5H216" stroke="#666" stroke-width="1.2" fill="none"/><circle cx="224.0" cy="27.25" r="5.5" fill="none" stroke="#111" stroke-width="1.5"/><circle cx="224.0" cy="27.25" r="1" fill="#111"/><rect x="232.3" y="19.5" width="16" height="15.5" fill="#fafafa"/><path d="M247.8 20.0V34.5H232.3" stroke="#666" stroke-width="1.2" fill="none"/><path d="M240.3 21.25L246.3 24.25V30.25L240.3 33.25L234.3 30.25V24.25Z" fill="none" stroke="#111" stroke-width="1.5"/><path d="M234.3 24.25L240.3 27.25L246.3 24.25M240.3 27.25V33.25" stroke="#111" stroke-width="1"/><rect x="248.6" y="19.5" width="16" height="15.5" fill="#fafafa"/><path d="M264.1 20.0V34.5H248.6" stroke="#666" stroke-width="1.2" fill="none"/><circle cx="256.6" cy="27.25" r="5.5" fill="none" stroke="#111" stroke-width="1.5"/><circle cx="256.6" cy="27.25" r="1" fill="#111"/><rect x="271.2" y="19.5" width="16" height="15.5" fill="#fafafa"/><path d="M286.7 20.0V34.5H271.2" stroke="#666" stroke-width="1.2" fill="none"/><path d="M273.2 32.25L282.2 22.25M276.2 32.25L285.2 22.25M274.2 29.25L280.2 22.25" stroke="#9a9a9a" stroke-width="1.3"/><rect x="287.6" y="19.5" width="16" height="15.5" fill="#fafafa"/><path d="M303.1 20.0V34.5H287.6" stroke="#666" stroke-width="1.2" fill="none"/><circle cx="295.6" cy="27.25" r="5" fill="none" stroke="#111" stroke-width="1.5"/><circle cx="294.1" cy="26.25" r="1.5" fill="#111"/><circle cx="297.6" cy="29.25" r="1.5" fill="#111"/><rect x="311" y="19.5" width="16" height="15.5" fill="#fafafa"/><path d="M326.5 20.0V34.5H311" stroke="#666" stroke-width="1.2" fill="none"/><path d="M314.0 31.25L316.0 23.25L322.0 22.25L324.0 30.25Z" fill="none" stroke="#9a9a9a" stroke-width="1.4"/><circle cx="319.0" cy="27.25" r="2" fill="#9a9a9a"/><rect x="327.3" y="19.5" width="16" height="15.5" fill="#fafafa"/><path d="M342.8 20.0V34.5H327.3" stroke="#666" stroke-width="1.2" fill="none"/><path d="M330.3 31.25L332.3 23.25L338.3 22.25L340.3 30.25Z" fill="none" stroke="#9a9a9a" stroke-width="1.4"/><circle cx="335.3" cy="27.25" r="2" fill="#9a9a9a"/><rect x="343.6" y="19.5" width="16" height="15.5" fill="#fafafa"/><path d="M359.1 20.0V34.5H343.6" stroke="#666" stroke-width="1.2" fill="none"/><path d="M346.6 31.25L348.6 23.25L354.6 22.25L356.6 30.25Z" fill="none" stroke="#9a9a9a" stroke-width="1.4"/><circle cx="351.6" cy="27.25" r="2" fill="#9a9a9a"/><rect x="360" y="19.5" width="16" height="15.5" fill="#fafafa"/><path d="M375.5 20.0V34.5H360" stroke="#666" stroke-width="1.2" fill="none"/><path d="M363.0 31.25L365.0 23.25L371.0 22.25L373.0 30.25Z" fill="none" stroke="#9a9a9a" stroke-width="1.4"/><circle cx="368.0" cy="27.25" r="2" fill="#9a9a9a"/><rect x="376.2" y="19.5" width="16" height="15.5" fill="#fafafa"/><path d="M391.7 20.0V34.5H376.2" stroke="#666" stroke-width="1.2" fill="none"/><circle cx="384.2" cy="27.25" r="5" fill="none" stroke="#9a9a9a" stroke-width="1.5"/><circle cx="382.7" cy="26.25" r="1.5" fill="#9a9a9a"/><circle cx="386.2" cy="29.25" r="1.5" fill="#9a9a9a"/><rect x="408.3" y="19.5" width="16" height="15.5" fill="#fafafa"/><path d="M423.8 20.0V34.5H408.3" stroke="#666" stroke-width="1.2" fill="none"/><text x="416.3" y="26.25" font-size="5" fill="#9a9a9a" text-anchor="middle" font-family='"Liberation Sans", sans-serif'>UN</text><path d="M411.3 30.25a2 2 0 1 0 4 0a2 2 0 1 0 -4 0M417.3 30.25a2 2 0 1 0 4 0a2 2 0 1 0 -4 0" stroke="#9a9a9a" fill="none"/><rect x="424.6" y="19.5" width="16" height="15.5" fill="#fafafa"/><path d="M440.1 20.0V34.5H424.6" stroke="#666" stroke-width="1.2" fill="none"/><text x="432.6" y="26.25" font-size="5" fill="#9a9a9a" text-anchor="middle" font-family='"Liberation Sans", sans-serif'>UN</text><path d="M427.6 30.25a2 2 0 1 0 4 0a2 2 0 1 0 -4 0M433.6 30.25a2 2 0 1 0 4 0a2 2 0 1 0 -4 0" stroke="#9a9a9a" fill="none"/><rect x="447.6" y="19.5" width="16" height="15.5" fill="#fafafa"/><path d="M463.1 20.0V34.5H447.6" stroke="#666" stroke-width="1.2" fill="none"/><path d="M450.6 31.25L452.6 23.25L458.6 22.25L460.6 30.25Z" fill="none" stroke="#9a9a9a" stroke-width="1.4"/><circle cx="455.6" cy="27.25" r="2" fill="#9a9a9a"/><rect x="463.8" y="19.5" width="16" height="15.5" fill="#fafafa"/><path d="M479.3 20.0V34.5H463.8" stroke="#666" stroke-width="1.2" fill="none"/><path d="M466.8 31.25L468.8 23.25L474.8 22.25L476.8 30.25Z" fill="none" stroke="#9a9a9a" stroke-width="1.4"/><circle cx="471.8" cy="27.25" r="2" fill="#9a9a9a"/><rect x="480" y="19.5" width="16" height="15.5" fill="#fafafa"/><path d="M495.5 20.0V34.5H480" stroke="#666" stroke-width="1.2" fill="none"/><path d="M483.0 31.25L485.0 23.25L491.0 22.25L493.0 30.25Z" fill="none" stroke="#9a9a9a" stroke-width="1.4"/><circle cx="488.0" cy="27.25" r="2" fill="#9a9a9a"/><rect x="501.5" y="19.5" width="16" height="15.5" fill="#fafafa"/><path d="M517.0 20.0V34.5H501.5" stroke="#666" stroke-width="1.2" fill="none"/><path d="M509.5 21.25V25.25M509.5 29.25V33.25M503.5 27.25H507.5M511.5 27.25H515.5M505.5 23.25L507.5 25.25M513.5 31.25L511.5 29.25M513.5 23.25L511.5 25.25M505.5 31.25L507.5 29.25" stroke="#9a9a9a" stroke-width="1.2"/><rect x="532.5" y="19.5" width="16" height="15.5" fill="#fafafa"/><path d="M548.0 20.0V34.5H532.5" stroke="#666" stroke-width="1.2" fill="none"/><path d="M535.5 31.25L537.5 23.25L543.5 22.25L545.5 30.25Z" fill="none" stroke="#9a9a9a" stroke-width="1.4"/><circle cx="540.5" cy="27.25" r="2" fill="#9a9a9a"/><rect x="555" y="19.5" width="16" height="15.5" fill="#fafafa"/><path d="M570.5 20.0V34.5H555" stroke="#666" stroke-width="1.2" fill="none"/><circle cx="563.0" cy="27.25" r="5" fill="none" stroke="#9a9a9a" stroke-width="1.5"/><circle cx="561.5" cy="26.25" r="1.5" fill="#9a9a9a"/><circle cx="565.0" cy="29.25" r="1.5" fill="#9a9a9a"/><rect x="571.2" y="19.5" width="16" height="15.5" fill="#fafafa"/><path d="M586.7 20.0V34.5H571.2" stroke="#666" stroke-width="1.2" fill="none"/><circle cx="579.2" cy="27.25" r="5" fill="none" stroke="#9a9a9a" stroke-width="1.5"/><circle cx="577.7" cy="26.25" r="1.5" fill="#9a9a9a"/><circle cx="581.2" cy="29.25" r="1.5" fill="#9a9a9a"/><rect x="587.4" y="19.5" width="16" height="15.5" fill="#fafafa"/><path d="M602.9 20.0V34.5H587.4" stroke="#666" stroke-width="1.2" fill="none"/><path d="M590.4 31.25L592.4 23.25L598.4 22.25L600.4 30.25Z" fill="none" stroke="#9a9a9a" stroke-width="1.4"/><circle cx="595.4" cy="27.25" r="2" fill="#9a9a9a"/><rect x="603.6" y="19.5" width="16" height="15.5" fill="#fafafa"/><path d="M619.1 20.0V34.5H603.6" stroke="#666" stroke-width="1.2" fill="none"/><path d="M606.6 31.25L608.6 23.25L614.6 22.25L616.6 30.25Z" fill="none" stroke="#9a9a9a" stroke-width="1.4"/><circle cx="611.6" cy="27.25" r="2" fill="#9a9a9a"/><rect x="626" y="19.5" width="16" height="15.5" fill="#fafafa"/><path d="M641.5 20.0V34.5H626" stroke="#666" stroke-width="1.2" fill="none"/><rect x="629.0" y="25.25" width="7" height="7" fill="none" stroke="#9a9a9a" stroke-width="1.5"/><rect x="632.0" y="22.25" width="7" height="7" fill="none" stroke="#9a9a9a" stroke-width="1.5"/><rect x="642.3" y="19.5" width="16" height="15.5" fill="#fafafa"/><path d="M657.8 20.0V34.5H642.3" stroke="#666" stroke-width="1.2" fill="none"/><rect x="645.3" y="25.25" width="7" height="7" fill="none" stroke="#9a9a9a" stroke-width="1.5"/><rect x="648.3" y="22.25" width="7" height="7" fill="none" stroke="#9a9a9a" stroke-width="1.5"/><rect x="659.5" y="19.5" width="16" height="15.5" fill="#fafafa"/><path d="M675.0 20.0V34.5H659.5" stroke="#666" stroke-width="1.2" fill="none"/><path d="M662.5 31.25L664.5 23.25L670.5 22.25L672.5 30.25Z" fill="none" stroke="#9a9a9a" stroke-width="1.4"/><circle cx="667.5" cy="27.25" r="2" fill="#9a9a9a"/><rect x="675.7" y="19.5" width="16" height="15.5" fill="#fafafa"/><path d="M691.2 20.0V34.5H675.7" stroke="#666" stroke-width="1.2" fill="none"/><circle cx="683.7" cy="27.25" r="5" fill="none" stroke="#9a9a9a" stroke-width="1.5"/><circle cx="682.2" cy="26.25" r="1.5" fill="#9a9a9a"/><circle cx="685.7" cy="29.25" r="1.5" fill="#9a9a9a"/><rect x="698.5" y="19.5" width="16" height="15.5" fill="#fafafa"/><path d="M714.0 20.0V34.5H698.5" stroke="#666" stroke-width="1.2" fill="none"/><path d="M701.5 22.25V32.25M711.5 22.25V32.25M701.5 27.25H711.5" stroke="#9a9a9a" stroke-width="2"/><rect x="714.8" y="19.5" width="16" height="15.5" fill="#fafafa"/><path d="M730.3 20.0V34.5H714.8" stroke="#666" stroke-width="1.2" fill="none"/><path d="M717.8 22.25V32.25M727.8 22.25V32.25M717.8 27.25H727.8" stroke="#9a9a9a" stroke-width="2"/><rect x="738.4" y="19.5" width="16" height="15.5" fill="#fafafa"/><path d="M753.9 20.0V34.5H738.4" stroke="#666" stroke-width="1.2" fill="none"/><path d="M741.4 31.25L743.4 23.25L749.4 22.25L751.4 30.25Z" fill="none" stroke="#9a9a9a" stroke-width="1.4"/><circle cx="746.4" cy="27.25" r="2" fill="#9a9a9a"/><rect x="754.6" y="19.5" width="16" height="15.5" fill="#fafafa"/><path d="M770.1 20.0V34.5H754.6" stroke="#666" stroke-width="1.2" fill="none"/><path d="M757.6 31.25L759.6 23.25L765.6 22.25L767.6 30.25Z" fill="none" stroke="#9a9a9a" stroke-width="1.4"/><circle cx="762.6" cy="27.25" r="2" fill="#9a9a9a"/><rect x="770.8" y="19.5" width="16" height="15.5" fill="#fafafa"/><path d="M786.3 20.0V34.5H770.8" stroke="#666" stroke-width="1.2" fill="none"/><path d="M773.8 22.25V32.25M783.8 22.25V32.25M773.8 27.25H783.8" stroke="#9a9a9a" stroke-width="2"/><rect x="793" y="19.5" width="16" height="15.5" fill="#fafafa"/><path d="M808.5 20.0V34.5H793" stroke="#666" stroke-width="1.2" fill="none"/><path d="M796.0 31.25L798.0 23.25L804.0 22.25L806.0 30.25Z" fill="none" stroke="#9a9a9a" stroke-width="1.4"/><circle cx="801.0" cy="27.25" r="2" fill="#9a9a9a"/><rect x="809.2" y="19.5" width="16" height="15.5" fill="#fafafa"/><path d="M824.7 20.0V34.5H809.2" stroke="#666" stroke-width="1.2" fill="none"/><path d="M812.2 31.25L814.2 23.25L820.2 22.25L822.2 30.25Z" fill="none" stroke="#9a9a9a" stroke-width="1.4"/><circle cx="817.2" cy="27.25" r="2" fill="#9a9a9a"/><rect x="835" y="19.5" width="16" height="15.5" fill="#fafafa"/><path d="M850.5 20.0V34.5H835" stroke="#666" stroke-width="1.2" fill="none"/><path d="M843.0 21.25L849.0 24.25V30.25L843.0 33.25L837.0 30.25V24.25Z" fill="#d83030"/><path d="M837.0 24.25L843.0 27.25L849.0 24.25M843.0 27.25V33.25" stroke="#8a1010" stroke-width="0.8"/><rect x="851.6" y="19.5" width="16" height="15.5" fill="#f4f4f4"/><path d="M852.1 35.0V20.0H867.6" stroke="#555" stroke-width="1.2" fill="none"/><path d="M853.1 34.0V21.0H866.6" stroke="#999" stroke-width="1" fill="none"/><path d="M859.6 21.25L865.6 24.25V30.25L859.6 33.25L853.6 30.25V24.25Z" fill="#e86060" stroke="#222" stroke-width="1.2"/><path d="M853.6 24.25L859.6 27.25L865.6 24.25M859.6 27.25V33.25" stroke="#222" stroke-width="1" fill="#fff"/><rect x="868.2" y="19.5" width="16" height="15.5" fill="#fafafa"/><path d="M883.7 20.0V34.5H868.2" stroke="#666" stroke-width="1.2" fill="none"/><path d="M876.2 21.25L882.2 24.25V30.25L876.2 33.25L870.2 30.25V24.25Z" fill="#e8a0a0" stroke="#222" stroke-width="1.2"/><path d="M870.2 24.25L876.2 27.25L882.2 24.25M876.2 27.25V33.25" stroke="#222" stroke-width="1"/><rect x="891" y="19.5" width="16" height="15.5" fill="#fafafa"/><path d="M906.5 20.0V34.5H891" stroke="#666" stroke-width="1.2" fill="none"/><rect x="894.0" y="25.25" width="7" height="7" fill="none" stroke="#111" stroke-width="1.5"/><rect x="897.0" y="22.25" width="7" height="7" fill="none" stroke="#111" stroke-width="1.5"/><rect x="913.6" y="19.5" width="16" height="15.5" fill="#fafafa"/><path d="M929.1 20.0V34.5H913.6" stroke="#666" stroke-width="1.2" fill="none"/><path d="M915.6 24.25V21.25H918.6M924.6 21.25H927.6V24.25M927.6 30.25V33.25H924.6M918.6 33.25H915.6V30.25" stroke="#333" stroke-width="1.2" fill="none"/><ellipse cx="921.6" cy="27.25" rx="3.5" ry="5" fill="#2040c0"/><rect x="937.6" y="19.5" width="16" height="15.5" fill="#fafafa"/><path d="M953.1 20.0V34.5H937.6" stroke="#666" stroke-width="1.2" fill="none"/><path d="M945.6 21.25L947.6 24.25H943.6ZM945.6 33.25L947.6 30.25H943.6ZM939.6 27.25L942.6 25.25V29.25ZM951.6 27.25L948.6 25.25V29.25Z" fill="#111"/><circle cx="945.6" cy="27.25" r="1.5" fill="#111"/><rect x="953.8" y="19.5" width="16" height="15.5" fill="#fafafa"/><path d="M969.3 20.0V34.5H953.8" stroke="#666" stroke-width="1.2" fill="none"/><circle cx="961.8" cy="27.25" r="4.5" fill="none" stroke="#111" stroke-width="1.5"/><path d="M955.8 27.25H959.8M961.8 21.25V25.25" stroke="#111" stroke-width="1.5"/><rect x="970" y="19.5" width="16" height="15.5" fill="#fafafa"/><path d="M985.5 20.0V34.5H970" stroke="#666" stroke-width="1.2" fill="none"/><path d="M982.0 24.25A5 5 0 1 1 976.0 22.25" fill="none" stroke="#111" stroke-width="1.6"/><circle cx="978.0" cy="27.25" r="1.5" fill="#111"/><rect x="986.2" y="19.5" width="16" height="15.5" fill="#fafafa"/><path d="M1001.7 20.0V34.5H986.2" stroke="#666" stroke-width="1.2" fill="none"/><circle cx="994.2" cy="25.75" r="4" fill="none" stroke="#111" stroke-width="1.6"/><path d="M994.2 29.75V33.25" stroke="#111" stroke-width="1.6"/><path d="M177 18V35" stroke="#b0b0b0" stroke-width="1"/><path d="M178 18V35" stroke="#fff" stroke-width="1"/><path d="M398 18V35" stroke="#b0b0b0" stroke-width="1"/><path d="M399 18V35" stroke="#fff" stroke-width="1"/><path d="M525 18V35" stroke="#b0b0b0" stroke-width="1"/><path d="M526 18V35" stroke="#fff" stroke-width="1"/><path d="M830 18V35" stroke="#b0b0b0" stroke-width="1"/><path d="M831 18V35" stroke="#fff" stroke-width="1"/>
<rect x="512.4" y="46.7" width="14" height="13" fill="#f8f8f8"/><path d="M525.9 46.7V59.2H512.4" stroke="#777" stroke-width="1.2" fill="none"/><rect x="514.4" y="48.7" width="10" height="9" fill="none" stroke="#111" stroke-width="1.6"/><path d="M516.4 56.2L523.4 49.2" stroke="#111" stroke-width="1.5"/><rect x="529.4" y="46.7" width="14" height="13" fill="#f8f8f8"/><path d="M542.9 46.7V59.2H529.4" stroke="#777" stroke-width="1.2" fill="none"/><path d="M530.4 58.2L539.4 48.2M533.4 58.2L542.4 48.2M531.4 55.2L537.4 48.2" stroke="#9a9a9a" stroke-width="1.3"/><rect x="546.5" y="46.7" width="14" height="13" fill="#f8f8f8"/><path d="M560.0 46.7V59.2H546.5" stroke="#777" stroke-width="1.2" fill="none"/><rect x="548.5" y="51.2" width="7" height="7" fill="none" stroke="#9a9a9a" stroke-width="1.5"/><rect x="551.5" y="48.2" width="7" height="7" fill="none" stroke="#9a9a9a" stroke-width="1.5"/><rect x="562" y="46.7" width="14" height="13" fill="#f8f8f8"/><path d="M575.5 46.7V59.2H562" stroke="#777" stroke-width="1.2" fill="none"/><rect x="563.5" y="48.2" width="11" height="10" fill="none" stroke="#111" stroke-width="1.8"/><path d="M566 55.2H572" stroke="#111" stroke-width="1.5"/><rect x="583.5" y="46.7" width="106" height="13" fill="#fff" stroke="#777" stroke-width="1"/><path d="M0.8 2V4.5 M0.8 2H4.5Q4.5 7 1.5 9.5" transform="translate(586.00 48.70) scale(0.900)" stroke="#111" stroke-width="1.00" fill="none" stroke-linecap="round" stroke-linejoin="round"/><path d="M0.5 5.5H4.5" transform="translate(590.50 48.70) scale(0.900)" stroke="#111" stroke-width="1.00" fill="none" stroke-linecap="round" stroke-linejoin="round"/><path d="M2 1L0.5 4 M1.5 2.5H4.5Q4 7 1 9.5" transform="translate(595.00 48.70) scale(0.900)" stroke="#111" stroke-width="1.00" fill="none" stroke-linecap="round" stroke-linejoin="round"/><path d="M0.5 3.5H4.5V8L3.5 9 M2.5 1Q2.5 7 0.5 9.5" transform="translate(599.50 48.70) scale(0.900)" stroke="#111" stroke-width="1.00" fill="none" stroke-linecap="round" stroke-linejoin="round"/><path d="M4 1.5Q3.5 7 0.5 9.5 M1.5 4.5L4.5 8" transform="translate(604.00 48.70) scale(0.900)" stroke="#111" stroke-width="1.00" fill="none" stroke-linecap="round" stroke-linejoin="round"/><path d="M1 1.5H4 M0.5 3.5H4.5Q4.5 7 1.5 9.5" transform="translate(608.50 48.70) scale(0.900)" stroke="#111" stroke-width="1.00" fill="none" stroke-linecap="round" stroke-linejoin="round"/><text x="613.00" y="56.62" font-size="9" fill="#111" font-family='"Liberation Sans", sans-serif'>1</text><rect x="678" y="47.7" width="11" height="11" fill="#f0f0f0"/><path d="M681 51.7H686L683.5 54.7Z" fill="#111"/><rect x="701" y="46.7" width="13" height="13" fill="#f8f8f8"/><path d="M713.5 46.7V59.2H701" stroke="#777" stroke-width="1.2" fill="none"/><rect x="703" y="48.7" width="9" height="9" fill="none" stroke="#a02020" stroke-width="1.2"/><path d="M703 48.7L712 57.7M712 48.7L703 57.7" stroke="#a02020" stroke-width="1.2"/><rect x="717" y="46.7" width="13" height="13" fill="#f8f8f8"/><path d="M729.5 46.7V59.2H717" stroke="#777" stroke-width="1.2" fill="none"/><rect x="719" y="48.7" width="9" height="9" fill="none" stroke="#aaa" stroke-width="1.2"/><path d="M719 48.7L728 57.7M728 48.7L719 57.7" stroke="#aaa" stroke-width="1.2"/><rect x="738.7" y="46.7" width="14" height="13" fill="#f8f8f8"/><path d="M752.2 46.7V59.2H738.7" stroke="#777" stroke-width="1.2" fill="none"/><path d="M740.7 48.2V58.2M750.7 48.2V58.2M740.7 53.2H750.7" stroke="#111" stroke-width="2"/><rect x="754" y="46.7" width="14" height="13" fill="#f8f8f8"/><path d="M767.5 46.7V59.2H754" stroke="#777" stroke-width="1.2" fill="none"/><path d="M756 57.2L758 49.2L764 48.2L766 56.2Z" fill="none" stroke="#111" stroke-width="1.4"/><circle cx="761" cy="53.2" r="2" fill="#111"/><rect x="769.7" y="46.7" width="14" height="13" fill="#f8f8f8"/><path d="M783.2 46.7V59.2H769.7" stroke="#777" stroke-width="1.2" fill="none"/><rect x="771.2" y="48.2" width="11" height="10" fill="#111"/><circle cx="774.7" cy="51.7" r="1.5" fill="#fff"/><circle cx="778.7" cy="55.2" r="1.5" fill="#fff"/><circle cx="774.7" cy="56.2" r="1.2" fill="#fff"/><rect x="785" y="46.7" width="14" height="13" fill="#f8f8f8"/><path d="M798.5 46.7V59.2H785" stroke="#777" stroke-width="1.2" fill="none"/><circle cx="792" cy="51.7" r="4" fill="none" stroke="#111" stroke-width="1.6"/><path d="M792 55.7V59.2" stroke="#111" stroke-width="1.6"/>
<rect x="508.3" y="377.5" width="488.7" height="14" fill="#f0f0f0"/><path d="M508.5 378.5H997" stroke="#fff"/><path d="M508.5 390.5V379.5H612" stroke="#a0a0a0" fill="none"/><path d="M612 379.5V390.5H508.5" stroke="#fff" fill="none"/><path d="M615 390.5V379.5H745" stroke="#a0a0a0" fill="none"/><path d="M745 379.5V390.5H615" stroke="#fff" fill="none"/><path d="M747 390.5V379.5H975" stroke="#a0a0a0" fill="none"/><path d="M975 379.5V390.5H747" stroke="#fff" fill="none"/><text x="509.00" y="388.19" font-size="8.4" fill="#111" font-family='"Liberation Sans", sans-serif'>679x434 </text><path d="M1 1.5V9L4.5 5.5" transform="translate(543.56 380.80) scale(0.860)" stroke="#111" stroke-width="1.05" fill="none" stroke-linecap="round" stroke-linejoin="round"/><path d="M4.5 1.5L0.5 6 M3 4V9.5" transform="translate(547.86 380.80) scale(0.860)" stroke="#111" stroke-width="1.05" fill="none" stroke-linecap="round" stroke-linejoin="round"/><path d="M1.5 1V9.5 M1.5 5L4.5 6.5" transform="translate(552.16 380.80) scale(0.860)" stroke="#111" stroke-width="1.05" fill="none" stroke-linecap="round" stroke-linejoin="round"/><path d="M1 1.5V9L4.5 5.5" transform="translate(556.46 380.80) scale(0.860)" stroke="#111" stroke-width="1.05" fill="none" stroke-linecap="round" stroke-linejoin="round"/><path d="M0.5 5.5H4.5" transform="translate(560.76 380.80) scale(0.860)" stroke="#111" stroke-width="1.05" fill="none" stroke-linecap="round" stroke-linejoin="round"/><path d="M0.5 2L1.5 3 M0.5 4.5L1.5 5.5 M0.5 9.5Q3.5 8 4.5 3" transform="translate(565.06 380.80) scale(0.860)" stroke="#111" stroke-width="1.05" fill="none" stroke-linecap="round" stroke-linejoin="round"/><path d="M0.5 2.5L1.5 3.5 M0.5 9L4.5 3" transform="translate(569.36 380.80) scale(0.860)" stroke="#111" stroke-width="1.05" fill="none" stroke-linecap="round" stroke-linejoin="round"/><path d="M2 1L0.5 4 M1.5 2.5H4.5Q4 7 1 9.5" transform="translate(573.66 380.80) scale(0.860)" stroke="#111" stroke-width="1.05" fill="none" stroke-linecap="round" stroke-linejoin="round"/><path d="M1 1L1.5 3 M3 0.8L3.5 2.8" transform="translate(577.96 380.80) scale(0.860)" stroke="#111" stroke-width="1.05" fill="none" stroke-linecap="round" stroke-linejoin="round"/><path d="M2 1L1 4.5H3.5 M1.5 5.5V9.5 M3 6V9 M5.5 1L4.5 3 M5 2H8L5 5.5 M6 3.5L9 5.5 M6 6.5L7 7.2 M5.5 8.5L7.5 9.5" transform="translate(617.00 380.00) scale(0.950)" stroke="#111" stroke-width="0.95" fill="none" stroke-linecap="round" stroke-linejoin="round"/><path d="M1.5 1.5H8.5L5.5 4 M5.5 4V9.5L4 9" transform="translate(626.50 380.00) scale(0.950)" stroke="#111" stroke-width="0.95" fill="none" stroke-linecap="round" stroke-linejoin="round"/><path d="M3.5 1V7.5Q4 9.5 8.5 7.5" transform="translate(636.00 380.00) scale(0.950)" stroke="#111" stroke-width="0.95" fill="none" stroke-linecap="round" stroke-linejoin="round"/><path d="M2 2.5H8 M2 5H8 M5 1V7.5Q5 9.5 3 9.5Q1.5 9 3 8Q6 7.5 8.5 9.5" transform="translate(645.50 380.00) scale(0.950)" stroke="#111" stroke-width="0.95" fill="none" stroke-linecap="round" stroke-linejoin="round"/><path d="M3.5 1V7.5Q4 9.5 8.5 7.5" transform="translate(655.00 380.00) scale(0.950)" stroke="#111" stroke-width="0.95" fill="none" stroke-linecap="round" stroke-linejoin="round"/><path d="M1.5 3H6 M3.5 1L2 9.5 M6 4.5H8.5 M6 9H9" transform="translate(664.50 380.00) scale(0.950)" stroke="#111" stroke-width="0.95" fill="none" stroke-linecap="round" stroke-linejoin="round"/><path d="M988 390L995 383M991 390L995 386" stroke="#999"/>
<svg x="508.5" y="65" width="475" height="312" viewBox="508.5 65 475 312"><g>
<defs><radialGradient id="bz" cx="50%" cy="45%" r="55%"><stop offset="0" stop-color="#3c3e40"/><stop offset="0.8" stop-color="#37393b"/><stop offset="1" stop-color="#4a4d50"/></radialGradient><linearGradient id="strap" x1="0" x2="1"><stop offset="0" stop-color="#2f4427"/><stop offset="0.5" stop-color="#435f35"/><stop offset="1" stop-color="#2f4427"/></linearGradient><linearGradient id="crown" x1="0" x2="0" y1="0" y2="1"><stop offset="0" stop-color="#d0d3d6"/><stop offset="0.5" stop-color="#888b8e"/><stop offset="1" stop-color="#c0c3c6"/></linearGradient></defs>
<path d="M693 130 V104 Q693 93.5 706 93.5 H788 Q801 93.5 801 104 V130 Z" fill="url(#strap)"/>
<path d="M696 318 V344 Q696 357 709 357 H794 Q807 357 807 344 V318 Z" fill="url(#strap)"/>
<path d="M702 105H738 M758 105H793 M705 343H742 M762 343H799" stroke="#26371f" stroke-width="2"/>
<path d="M670.5 112 H694 V150 L686 178 H664 V130 Z M801 112 H826 V130 L833 150 V178 H812 L801 150 Z" fill="#3d4043"/>
<path d="M665 290 H690 L697 320 V340 H672 L665 320 Z M807 290 H832 V320 L832 340 H806 V320 Z" fill="#3d4043"/>
<rect x="848" y="211" width="24" height="27" rx="4" fill="url(#crown)"/>
<path d="M855 212V237 M860 212V237 M865 212V237" stroke="#4a4d50" stroke-width="1.2"/>
<rect x="836" y="162" width="19" height="15" rx="4" fill="url(#crown)" transform="rotate(40 845 170)"/>
<rect x="836" y="270" width="19" height="15" rx="4" fill="url(#crown)" transform="rotate(-40 845 277)"/>
<circle cx="748.5" cy="225.5" r="100" fill="url(#bz)" stroke="#6a6d70" stroke-width="1.6"/>
<circle cx="748.5" cy="225.5" r="96.5" fill="none" stroke="#55585b" stroke-width="1"/>
<circle cx="839.5" cy="225.5" r="5.2" fill="#262829" stroke="#6a6d70" stroke-width="1.3"/>
<circle cx="839.5" cy="225.5" r="1.8" fill="#6a6a6a"/>
<circle cx="794.0" cy="304.3" r="5.2" fill="#262829" stroke="#6a6d70" stroke-width="1.3"/>
<circle cx="794.0" cy="304.3" r="1.8" fill="#6a6a6a"/>
<circle cx="703.0" cy="304.3" r="5.2" fill="#262829" stroke="#6a6d70" stroke-width="1.3"/>
<circle cx="703.0" cy="304.3" r="1.8" fill="#6a6a6a"/>
<circle cx="657.5" cy="225.5" r="5.2" fill="#262829" stroke="#6a6d70" stroke-width="1.3"/>
<circle cx="657.5" cy="225.5" r="1.8" fill="#6a6a6a"/>
<circle cx="703.0" cy="146.7" r="5.2" fill="#262829" stroke="#6a6d70" stroke-width="1.3"/>
<circle cx="703.0" cy="146.7" r="1.8" fill="#6a6a6a"/>
<circle cx="794.0" cy="146.7" r="5.2" fill="#262829" stroke="#6a6d70" stroke-width="1.3"/>
<circle cx="794.0" cy="146.7" r="1.8" fill="#6a6a6a"/>
<circle cx="764.5" cy="316.1" r="3.2" fill="#262829" stroke="#6a6d70" stroke-width="1.3"/>
<circle cx="732.5" cy="316.1" r="3.2" fill="#262829" stroke="#6a6d70" stroke-width="1.3"/>
<circle cx="732.5" cy="134.9" r="3.2" fill="#262829" stroke="#6a6d70" stroke-width="1.3"/>
<circle cx="764.5" cy="134.9" r="3.2" fill="#262829" stroke="#6a6d70" stroke-width="1.3"/>
<circle cx="828.2" cy="271.5" r="3.2" fill="#262829" stroke="#6a6d70" stroke-width="1.3"/>
<circle cx="668.8" cy="271.5" r="3.2" fill="#262829" stroke="#6a6d70" stroke-width="1.3"/>
<circle cx="668.8" cy="179.5" r="3.2" fill="#262829" stroke="#6a6d70" stroke-width="1.3"/>
<circle cx="828.2" cy="179.5" r="3.2" fill="#262829" stroke="#6a6d70" stroke-width="1.3"/>
<circle cx="748.5" cy="225.5" r="84.5" fill="#4a4c4e" stroke="#b0b3b6" stroke-width="1.6"/>
<circle cx="748.5" cy="225.5" r="62.5" fill="#343536" stroke="#8f9295" stroke-width="1.2"/>
<path d="M821.1 233.1L828.1 233.9M819.9 240.7L826.8 242.1M817.9 248.1L824.6 250.2M815.2 255.2L821.6 258.0M807.6 268.4L813.2 272.5M802.7 274.3L808.0 279.0M797.3 279.7L802.0 285.0M791.4 284.6L795.5 290.2M778.2 292.2L781.0 298.6M771.1 294.9L773.2 301.6M763.7 296.9L765.1 303.8M756.1 298.1L756.9 305.1M740.9 298.1L740.1 305.1M733.3 296.9L731.9 303.8M725.9 294.9L723.8 301.6M718.8 292.2L716.0 298.6M705.6 284.6L701.5 290.2M699.7 279.7L695.0 285.0M694.3 274.3L689.0 279.0M689.4 268.4L683.8 272.5M681.8 255.2L675.4 258.0M679.1 248.1L672.4 250.2M677.1 240.7L670.2 242.1M675.9 233.1L668.9 233.9M675.9 217.9L668.9 217.1M677.1 210.3L670.2 208.9M679.1 202.9L672.4 200.8M681.8 195.8L675.4 193.0M689.4 182.6L683.8 178.5M694.3 176.7L689.0 172.0M699.7 171.3L695.0 166.0M705.6 166.4L701.5 160.8M718.8 158.8L716.0 152.4M725.9 156.1L723.8 149.4M733.3 154.1L731.9 147.2M740.9 152.9L740.1 145.9M756.1 152.9L756.9 145.9M763.7 154.1L765.1 147.2M771.1 156.1L773.2 149.4M778.2 158.8L781.0 152.4M791.4 166.4L795.5 160.8M797.3 171.3L802.0 166.0M802.7 176.7L808.0 172.0M807.6 182.6L813.2 178.5M815.2 195.8L821.6 193.0M817.9 202.9L824.6 200.8M819.9 210.3L826.8 208.9M821.1 217.9L828.1 217.1" stroke="#f0f0f0" stroke-width="1.5"/>
<rect x="745.0" y="148.5" width="7" height="14" fill="#5da23a" stroke="#8fd060" stroke-width="0.8" transform="rotate(0 748.5 156.5)"/>
<rect x="777.0" y="156.3" width="16" height="12" fill="#8d9093" transform="rotate(30 785.0 162.3)"/>
<text x="785.0" y="166.1" font-size="10" font-weight="bold" fill="#fff" text-anchor="middle" font-family="Liberation Sans, sans-serif" transform="rotate(30 785.0 162.3)">05</text>
<rect x="804.8" y="183.0" width="7" height="14" fill="#5da23a" stroke="#8fd060" stroke-width="0.8" transform="rotate(60 808.3 191.0)"/>
<rect x="813.5" y="219.5" width="16" height="12" fill="#8d9093" transform="rotate(90 821.5 225.5)"/>
<text x="821.5" y="229.3" font-size="10" font-weight="bold" fill="#fff" text-anchor="middle" font-family="Liberation Sans, sans-serif" transform="rotate(90 821.5 225.5)">15</text>
<rect x="804.8" y="252.0" width="7" height="14" fill="#5da23a" stroke="#8fd060" stroke-width="0.8" transform="rotate(120 808.3 260.0)"/>
<rect x="777.0" y="282.7" width="16" height="12" fill="#8d9093" transform="rotate(-30 785.0 288.7)"/>
<text x="785.0" y="292.5" font-size="10" font-weight="bold" fill="#fff" text-anchor="middle" font-family="Liberation Sans, sans-serif" transform="rotate(-30 785.0 288.7)">25</text>
<rect x="745.0" y="286.5" width="7" height="14" fill="#5da23a" stroke="#8fd060" stroke-width="0.8" transform="rotate(180 748.5 294.5)"/>
<rect x="704.0" y="282.7" width="16" height="12" fill="#8d9093" transform="rotate(30 712.0 288.7)"/>
<text x="712.0" y="292.5" font-size="10" font-weight="bold" fill="#fff" text-anchor="middle" font-family="Liberation Sans, sans-serif" transform="rotate(30 712.0 288.7)">35</text>
<rect x="685.2" y="252.0" width="7" height="14" fill="#5da23a" stroke="#8fd060" stroke-width="0.8" transform="rotate(240 688.7 260.0)"/>
<rect x="667.5" y="219.5" width="16" height="12" fill="#8d9093" transform="rotate(270 675.5 225.5)"/>
<text x="675.5" y="229.3" font-size="10" font-weight="bold" fill="#fff" text-anchor="middle" font-family="Liberation Sans, sans-serif" transform="rotate(270 675.5 225.5)">45</text>
<rect x="685.2" y="183.0" width="7" height="14" fill="#5da23a" stroke="#8fd060" stroke-width="0.8" transform="rotate(300 688.7 191.0)"/>
<rect x="704.0" y="156.3" width="16" height="12" fill="#8d9093" transform="rotate(330 712.0 162.3)"/>
<text x="712.0" y="166.1" font-size="10" font-weight="bold" fill="#fff" text-anchor="middle" font-family="Liberation Sans, sans-serif" transform="rotate(330 712.0 162.3)">55</text>
<clipPath id="dialc"><circle cx="748.5" cy="225.5" r="62"/></clipPath>
<g clip-path="url(#dialc)"><path d="M686.5 175.1H810.5M686.5 179.3H810.5M686.5 183.5H810.5M686.5 187.7H810.5M686.5 191.9H810.5M686.5 196.1H810.5M686.5 200.3H810.5M686.5 204.5H810.5M686.5 208.7H810.5M686.5 212.9H810.5M686.5 217.1H810.5M686.5 221.3H810.5M686.5 225.5H810.5M686.5 229.7H810.5M686.5 233.9H810.5M686.5 238.1H810.5M686.5 242.3H810.5M686.5 246.5H810.5M686.5 250.7H810.5M686.5 254.9H810.5M686.5 259.1H810.5M686.5 263.3H810.5M686.5 267.5H810.5M686.5 271.7H810.5M686.5 275.9H810.5" stroke="#2a2b2c" stroke-width="1.6"/><path d="M700 262 L745 215 M704 268 L749 221 M708 274 L753 227 M712 280 L757 233 M716 286 L761 239" stroke="#1e1f20" stroke-width="2.4"/></g>
<path d="M733 168 Q770 155 804 176 Q812 196 806 209 H733 Z" fill="#060606"/>
<text x="764" y="188.5" font-size="11" fill="#3ed8d0" text-anchor="middle" font-family="Liberation Mono, monospace" font-weight="bold">TU</text>
<text x="768" y="202" font-size="10" fill="#3ed8d0" text-anchor="middle" font-family="Liberation Mono, monospace" font-weight="bold">10:29</text>
<text x="768" y="207.5" font-size="3.5" fill="#cfd" text-anchor="middle" font-family="Liberation Sans, sans-serif">ALM</text>
<circle cx="727" cy="203" r="20" fill="#0a1212" stroke="#5c9e3c" stroke-width="2.6"/>
<circle cx="727" cy="203" r="16.5" fill="none" stroke="#d8d8d8" stroke-width="1.2" stroke-dasharray="1.2 2.4"/>
<path d="M716 194 L733 190 L729 199 Z M738 200 L733 216 L726 208 Z M714 212 L720 198 L725 207 Z" fill="#33c8c8"/>
<circle cx="750.5" cy="262" r="28" fill="#060606"/>
<text x="751" y="261" font-size="13" fill="#3ed8d0" text-anchor="middle" font-family="Liberation Mono, monospace" font-weight="bold">10:35</text>
<text x="752" y="279" font-size="13" fill="#3ed8d0" text-anchor="middle" font-family="Liberation Mono, monospace" font-weight="bold">26</text>
<circle cx="789" cy="248.5" r="9.5" fill="#2fb0ad"/>
<path d="M781 244H797 M780 248.5H798 M781 253H797" stroke="#0d4040" stroke-width="1.2"/>
<text x="775" y="238" font-size="3.5" fill="#ddd" text-anchor="middle" font-family="Liberation Sans, sans-serif">WR 50M</text>
<path d="M748.5 225.5 L796 189 M748.5 225.5 L717 271 M746.5 227.5 L705 207" stroke="#76c84a" stroke-width="2" stroke-linecap="round"/>
<path d="M748.5 225.5 L760 218 L790 196 L765 222 Z" fill="#76c84a"/>
<circle cx="748.5" cy="225.5" r="3" fill="#76c84a"/>
</g></svg>
<svg x="14.5" y="54" width="473" height="329" viewBox="14.5 54 473 329"><g>
<path d="M194 54 Q189 64 189.8 80 V140 M297.6 54 Q310 64 311.6 80 V121" stroke="#111" stroke-width="1" fill="none" />
<path d="M209.4 58.4 Q191 62 189.8 82 M300.4 58.4 Q311 62 311.6 82" stroke="#111" stroke-width="1" fill="none" />
<path d="M186.8 288 V356 Q190 372 199.6 382.4 M311.6 300 V356 Q308 372 298.8 382.4" stroke="#111" stroke-width="1" fill="none" />
<path d="M214.8 335 Q212 360 209.2 382.4 M287.6 335 Q290 360 292.4 382.4" stroke="#111" stroke-width="1" fill="none" />
<path d="M210.5 54 V335 Q212 360 209.2 383 M291.3 54 V335 Q290 360 292.4 383" stroke="#111" stroke-width="1.7" fill="none" />
<path d="M209.4 58.4H300.4 M190 73.1H311.6 M180 84.3H320" stroke="#111" stroke-width="1" fill="none" />
<path d="M199 56 Q195 75 196 100 M304 56 Q307 75 306 100" stroke="#111" stroke-width="0.8" fill="none" />
<path d="M170 303.2H330 M170 311H330 M170 314.4H330 M209 329.6H293 M209 333.6H293 M166 340.8H187 M312 340.8H335 M194 344.8H308 M186.8 356H311.6 M206 368H296" stroke="#111" stroke-width="1" fill="none" />
<rect x="246.8" y="300.0" width="8.0" height="31.0" stroke="#111" stroke-width="1" fill="none"/>
<rect x="167.0" y="286.6" width="20.0" height="55.0" stroke="#111" stroke-width="1" fill="none"/>
<rect x="313.0" y="286.6" width="18.0" height="55.0" stroke="#111" stroke-width="1" fill="none"/>
<path d="M167 333.7H187 M167 313.5H187 M313 333.7H331 M313 313.5H331" stroke="#111" stroke-width="0.8" fill="none" />
<rect x="160.3" y="290.0" width="6.7" height="30.2" stroke="#111" stroke-width="1" fill="none"/>
<rect x="331.0" y="290.0" width="7.7" height="30.2" stroke="#111" stroke-width="1" fill="none"/>
<rect x="155.8" y="295.5" width="4.5" height="11.5" stroke="#111" stroke-width="1" fill="none"/>
<rect x="338.7" y="295.5" width="4.8" height="11.5" stroke="#111" stroke-width="1" fill="none"/>
<rect x="167.0" y="85.4" width="20.0" height="55.0" stroke="#111" stroke-width="1" fill="none"/>
<rect x="313.0" y="85.4" width="18.0" height="55.0" stroke="#111" stroke-width="1" fill="none"/>
<path d="M167 93.3H187 M167 113.5H187 M313 93.3H331 M313 113.5H331" stroke="#111" stroke-width="0.8" fill="none" />
<rect x="160.3" y="106.8" width="6.7" height="30.2" stroke="#111" stroke-width="1" fill="none"/>
<rect x="331.0" y="106.8" width="7.7" height="30.2" stroke="#111" stroke-width="1" fill="none"/>
<rect x="155.8" y="120.0" width="4.5" height="11.5" stroke="#111" stroke-width="1" fill="none"/>
<rect x="338.7" y="120.0" width="4.8" height="11.5" stroke="#111" stroke-width="1" fill="none"/>
<path d="M167.0 137.0L138.3 173.0L138.3 255.0L166.6 288.0" stroke="#111" stroke-width="1.2" fill="none" />
<path d="M143.0 175.0L143.0 252.0" stroke="#111" stroke-width="0.8" fill="none" />
<path d="M338.7 137.0L365.7 173.0L365.7 255.0L338.0 290.0" stroke="#111" stroke-width="1.2" fill="none" />
<path d="M360.0 175.0L360.0 252.0" stroke="#111" stroke-width="0.8" fill="none" />
<circle cx="250.3" cy="213.5" r="113.5" stroke="#111" stroke-width="1.1" fill="none"/>
<circle cx="250.3" cy="213.5" r="110.0" stroke="#111" stroke-width="0.9" fill="none"/>
<circle cx="250.3" cy="213.5" r="102.0" stroke="#111" stroke-width="0.9" fill="none"/>
<circle cx="250.3" cy="213.5" r="90.0" stroke="#111" stroke-width="0.9" fill="none"/>
<circle cx="250.3" cy="213.5" r="72.0" stroke="#111" stroke-width="0.9" fill="none"/>
<circle cx="250.3" cy="213.5" r="66.0" stroke="#111" stroke-width="1" fill="none"/>
<path d="M315.7 222.1L357.4 227.6M311.3 238.8L350.1 254.8M302.7 253.7L336.0 279.2M290.5 265.9L316.0 299.2M275.6 274.5L291.6 313.3M258.9 278.9L264.4 320.6M241.7 278.9L236.2 320.6M225.0 274.5L209.0 313.3M210.1 265.9L184.6 299.2M197.9 253.7L164.6 279.2M189.3 238.8L150.5 254.8M184.9 222.1L143.2 227.6M184.9 204.9L143.2 199.4M189.3 188.2L150.5 172.2M197.9 173.3L164.6 147.8M210.1 161.1L184.6 127.8M225.0 152.5L209.0 113.7M241.7 148.1L236.2 106.4M258.9 148.1L264.4 106.4M275.6 152.5L291.6 113.7M290.5 161.1L316.0 127.8M302.7 173.3L336.0 147.8M311.3 188.2L350.1 172.2M315.7 204.9L357.4 199.4" stroke="#111" stroke-width="0.8" fill="none" />
<path d="M330.6 224.1L325.1 244.5L314.6 262.8L299.6 277.8L281.3 288.3L260.9 293.8L239.7 293.8L219.3 288.3L201.0 277.8L186.0 262.8L175.5 244.5L170.0 224.1L170.0 202.9L175.5 182.5L186.0 164.2L201.0 149.2L219.3 138.7L239.7 133.2L260.9 133.2L281.3 138.7L299.6 149.2L314.6 164.2L325.1 182.5L330.6 202.9L330.6 224.1" stroke="#111" stroke-width="0.7" fill="none" />
<path d="M145.8 173 H160 Q166 214 160 255 H145.8 Z M361 173 H348 Q342 214 348 255 H361 Z" stroke="#111" stroke-width="1" fill="none" />
<path d="M138.4 171 L157.3 150 M138.4 253 L165.8 284.6" stroke="#111" stroke-width="1" fill="none" />
<circle cx="201.0" cy="126.0" r="2.8" stroke="#111" stroke-width="1.1" fill="none"/>
<circle cx="201.0" cy="126.0" r="1.2" stroke="#111" stroke-width="0.8" fill="none"/>
<circle cx="304.2" cy="126.0" r="2.8" stroke="#111" stroke-width="1.1" fill="none"/>
<circle cx="304.2" cy="126.0" r="1.2" stroke="#111" stroke-width="0.8" fill="none"/>
<circle cx="201.0" cy="298.0" r="2.8" stroke="#111" stroke-width="1.1" fill="none"/>
<circle cx="201.0" cy="298.0" r="1.2" stroke="#111" stroke-width="0.8" fill="none"/>
<circle cx="304.2" cy="298.0" r="2.8" stroke="#111" stroke-width="1.1" fill="none"/>
<circle cx="304.2" cy="298.0" r="1.2" stroke="#111" stroke-width="0.8" fill="none"/>
<path d="M167 111.5H331 M167 114.8H331" stroke="#111" stroke-width="1" fill="none" />
<rect x="201.7" y="118.5" width="96.3" height="54.5" stroke="#111" stroke-width="1.2" fill="none"/>
<path d="M205.6 118.5V173 M294 118.5V173" stroke="#111" stroke-width="0.9" fill="none" />
<path d="M201.7 122.5H298 M201.7 125H298 M201.7 140.6H298 M201.7 149H298 M201.7 152.3H298" stroke="#111" stroke-width="1" fill="none" />
<path d="M201.7 145.2H298 M201.7 167.2H298" stroke="#111" stroke-width="2.2" fill="none" />
<path d="M225 122.5H265" stroke="#111" stroke-width="2.5" fill="none" />
<circle cx="227.8" cy="188.5" r="22.7" stroke="#111" stroke-width="1" fill="none"/>
<circle cx="227.8" cy="188.5" r="19.0" stroke="#111" stroke-width="0.9" fill="none"/>
<ellipse cx="251" cy="253" rx="31" ry="25" stroke="#111" stroke-width="1" fill="none"/>
<circle cx="291.8" cy="239.9" r="12.6" stroke="#111" stroke-width="1" fill="none"/>
<path d="M250.5 198.6H311 M210 209.6H291" stroke="#111" stroke-width="1" fill="none" />
<path d="M215.2 264.3 L301 177.6 M216.5 265.5 L302 178.8" stroke="#111" stroke-width="1" fill="none" />
<path d="M224.4 194.4 L245 205 L261.4 219.7 L241 209 Z" stroke="#111" stroke-width="1" fill="none" />
<path d="M241.2 219.7 L256 204" stroke="#111" stroke-width="1" fill="none" />
<path d="M361 213.4 L370.5 199 V227.8 Z" stroke="#111" stroke-width="1" fill="none" />
<rect x="370.5" y="199.0" width="8.5" height="28.8" stroke="#111" stroke-width="1" fill="none"/>
<path d="M373.5 199V227.8 M376.3 199V227.8 M370.5 206H379 M370.5 213H379 M370.5 220H379" stroke="#111" stroke-width="0.8" fill="none" />
<path d="M379 196.8 H385 Q389.6 198 389.6 213 Q389.6 228 385 229 H379 Z" stroke="#111" stroke-width="1.1" fill="none" />
<path d="M383 197V229" stroke="#111" stroke-width="0.8" fill="none" />
<rect x="368.0" y="183.6" width="7.3" height="6.0" stroke="#111" stroke-width="0.9" fill="none"/>
<rect x="368.0" y="236.0" width="7.3" height="7.3" stroke="#111" stroke-width="0.9" fill="none"/>
<g transform="rotate(-42 360 154)"><rect x="352.0" y="149.0" width="12.0" height="10.0" stroke="#111" stroke-width="1" fill="none"/><rect x="364.0" y="148.0" width="7.0" height="12.0" stroke="#111" stroke-width="1" fill="none"/><path d="M366.3 148V160M368.6 148V160" stroke="#111" stroke-width="0.8" fill="none" /><path d="M371 147H375Q379 148 379 154Q379 160 375 161H371Z" stroke="#111" stroke-width="1" fill="none" /></g>
<g transform="rotate(42 360 272)"><rect x="352.0" y="267.0" width="12.0" height="10.0" stroke="#111" stroke-width="1" fill="none"/><rect x="364.0" y="266.0" width="7.0" height="12.0" stroke="#111" stroke-width="1" fill="none"/><path d="M366.3 266V278M368.6 266V278" stroke="#111" stroke-width="0.8" fill="none" /><path d="M371 265H375Q379 266 379 272Q379 278 375 279H371Z" stroke="#111" stroke-width="1" fill="none" /></g>
</g></svg>
<svg x="14.5" y="411" width="473" height="285" viewBox="14.5 411 473 285"><g>
<path d="M140 426.8H361 Q363.8 427.5 363.8 430 V436.2 H138 V430 Q138 426.8 140 426.8Z" stroke="#111" stroke-width="1.2" fill="none" />
<path d="M146 427V436M158 427V436M172 427V436M190 427V436M210 427V436M232 427V436M254 427V436M276 427V436M298 427V436M318 427V436M336 427V436M350 427V436" stroke="#111" stroke-width="0.8" fill="none" />
<path d="M138 436.2V472.7H160 M145.7 472.7V479.5H167 V484 H333 V479 H353.4 V471 H354.3 V436.2" stroke="#111" stroke-width="1.1" fill="none" />
<path d="M138 440H354 M165 445.7H340 M184 466H314 M186 472.7H316 M186 478H316" stroke="#111" stroke-width="0.9" fill="none" />
<path d="M186 483.5H316" stroke="#111" stroke-width="1.1" fill="none" />
<path d="M145.7 436.2V472.7" stroke="#111" stroke-width="0.9" fill="none" />
<rect x="336.0" y="440.0" width="18.0" height="38.0" stroke="#111" stroke-width="0.9" fill="none"/>
<path d="M150 436V478 M158 436V470" stroke="#111" stroke-width="0.8" fill="none" />
<path d="M160.0 436Q170.0 462 188.0 483M172.9 436Q181.4 462 196.9 483M185.7 436Q192.9 462 205.7 483M198.6 436Q204.3 462 214.6 483M211.4 436Q215.7 462 223.4 483M224.3 436Q227.1 462 232.3 483M237.1 436Q238.6 462 241.1 483M250.0 436Q250.0 462 250.0 483M262.9 436Q261.4 462 258.9 483M275.7 436Q272.9 462 267.7 483M288.6 436Q284.3 462 276.6 483M301.4 436Q295.7 462 285.4 483M314.3 436Q307.1 462 294.3 483M327.1 436Q318.6 462 303.1 483M340.0 436Q330.0 462 312.0 483" stroke="#111" stroke-width="0.85" fill="none" />
<path d="M159.7 436.2 Q175 462 188 483.5 M342 436.2 Q328 462 314 483.5" stroke="#111" stroke-width="1.2" fill="none" />
<circle cx="201.6" cy="479.5" r="2.5" stroke="#111" stroke-width="1" fill="none"/>
<circle cx="303.0" cy="479.5" r="2.5" stroke="#111" stroke-width="1" fill="none"/>
<path d="M187.8 483.5 C196 545 211 575 211 612 V677.7" stroke="#111" stroke-width="1.3" fill="none" />
<path d="M312.8 483.5 C304 545 295 575 295 612 V677.7" stroke="#111" stroke-width="1.3" fill="none" />
<path d="M194 484 C202 545 215 578 215 616 V677" stroke="#111" stroke-width="0.9" fill="none" />
<path d="M306 484 C298 545 291 578 291 616 V677" stroke="#111" stroke-width="0.9" fill="none" />
<path d="M209 559.9H299 M213 608.4H293 M213 611.7H293" stroke="#111" stroke-width="1" fill="none" />
<rect x="200.5" y="635.3" width="99.4" height="43.7" stroke="#111" stroke-width="1.2" fill="none"/>
<rect x="204.0" y="638.6" width="91.5" height="37.0" stroke="#111" stroke-width="0.9" fill="none"/>
<path d="M210 679V683.5H292V679" stroke="#111" stroke-width="1" fill="none" />
<path d="M200.5 639H299.3 M200.5 642.5H299.3 M200.5 646H299.3 M200.5 649.5H299.3 M200.5 653H299.3 M200.5 657.5H299.3 M200.5 665H299.3 M200.5 668.5H299.3 M200.5 674.5H299.3 M210 683.5H292" stroke="#111" stroke-width="0.9" fill="none" />
<path d="M202 670.8H298" stroke="#111" stroke-width="1.8" fill="none" />
<rect x="246.7" y="635.6" width="8.3" height="16.8" stroke="#111" stroke-width="1" fill="none"/>
<path d="M205 635.6V684 M295 635.6V684" stroke="#111" stroke-width="0.8" fill="none" />
<rect x="343.5" y="440.0" width="8.5" height="30.0" stroke="#111" stroke-width="1" fill="none"/>
<rect x="352.0" y="438.0" width="25.0" height="30.0" stroke="#111" stroke-width="1" fill="none"/>
<path d="M355.0 441V466M358.0 441V466M361.0 441V466M364.0 441V466M367.0 441V466M370.0 441V466M373.0 441V466" stroke="#111" stroke-width="1" fill="none" />
<path d="M352 447H377 M352 453H377 M352 459H377" stroke="#111" stroke-width="0.8" fill="none" />
<path d="M377.3 435 H384 Q389.5 437 389.5 452.5 Q389.5 468 384 470 H377.3 Z" stroke="#111" stroke-width="1.1" fill="none" />
<path d="M381 435V470 M385 436V469" stroke="#111" stroke-width="0.8" fill="none" />
<path d="M244 585H258 M251 578V592" stroke="#999" stroke-width="0.7" fill="none" />
</g></svg>
<svg x="514.5" y="411" width="470" height="285" viewBox="514.5 411 470 285"><g>
<path d="M646 427.3H866 Q869.5 428 869.5 431 V437.2 H643 V431 Q643 427.3 646 427.3Z" stroke="#111" stroke-width="1.3" fill="none" />
<path d="M650.3 437.2V474H859.6V437.2 M678 437.2V482H834V437.2" stroke="#111" stroke-width="1.2" fill="none" />
<path d="M654 443H856 M660 469.4H850 M678 473H834 M678 477.5H834" stroke="#111" stroke-width="0.9" fill="none" />
<path d="M654.0 428Q659.8 455 679.0 481M672.0 428Q676.8 455 692.6 481M690.0 428Q693.7 455 706.2 481M706.0 428Q708.8 455 718.3 481M718.0 428Q720.2 455 727.3 481M734.0 428Q735.2 455 739.4 481M752.0 428Q752.2 455 753.0 481M770.0 428Q769.2 455 766.6 481M784.0 428Q782.4 455 777.1 481M800.0 428Q797.5 455 789.2 481M816.0 428Q812.6 455 801.3 481M832.0 428Q827.7 455 813.4 481M850.0 428Q844.7 455 826.9 481M860.0 428Q854.1 455 834.5 481" stroke="#111" stroke-width="0.9" fill="none" />
<circle cx="695.2" cy="453.3" r="11.0" stroke="#111" stroke-width="1.2" fill="none"/>
<clipPath id="kp695"><circle cx="695.2" cy="453.3" r="10"/></clipPath><g clip-path="url(#kp695)"><path d="M686.4 443V463.5M688.6 443V463.5M690.8 443V463.5M693.0 443V463.5M695.2 443V463.5M697.4 443V463.5M699.6 443V463.5M701.8 443V463.5M704.0 443V463.5" stroke="#111" stroke-width="1" fill="none" /><path d="M685.2 448H705.2M685.2 453H705.2M685.2 458H705.2" stroke="#111" stroke-width="0.9" fill="none" /></g>
<circle cx="817.0" cy="453.3" r="11.0" stroke="#111" stroke-width="1.2" fill="none"/>
<clipPath id="kp817"><circle cx="817" cy="453.3" r="10"/></clipPath><g clip-path="url(#kp817)"><path d="M808.2 443V463.5M810.4 443V463.5M812.6 443V463.5M814.8 443V463.5M817.0 443V463.5M819.2 443V463.5M821.4 443V463.5M823.6 443V463.5M825.8 443V463.5" stroke="#111" stroke-width="1" fill="none" /><path d="M807 448H827M807 453H827M807 458H827" stroke="#111" stroke-width="0.9" fill="none" /></g>
<circle cx="757.3" cy="453.3" r="15.0" stroke="#111" stroke-width="1.1" fill="none"/>
<circle cx="757.3" cy="453.3" r="10.0" stroke="#111" stroke-width="1" fill="none"/>
<path d="M746.5 442.5L768 464 M742 453.3H772" stroke="#111" stroke-width="1.1" fill="none" />
<circle cx="667.6" cy="456.8" r="5.5" stroke="#111" stroke-width="1" fill="none"/>
<circle cx="843.5" cy="456.8" r="5.5" stroke="#111" stroke-width="1" fill="none"/>
<circle cx="672.2" cy="479.8" r="2.5" stroke="#111" stroke-width="1" fill="none"/>
<circle cx="842.4" cy="479.8" r="2.5" stroke="#111" stroke-width="1" fill="none"/>
<path d="M660 443 L690 470 M850 443 L820 470 M665 437 L700 482 M845 437 L810 482" stroke="#111" stroke-width="0.9" fill="none" />
<path d="M627.4 450.8 L642.8 437 L652 474 L635 483.2 Z" stroke="#111" stroke-width="1" fill="none" />
<path d="M897.1 469.3 L858.6 437 L858.6 472.4 L884.8 490.9" stroke="#111" stroke-width="1" fill="none" />
<path d="M642.8 437.0L612.0 464.7L593.5 494.0L585.8 537.1L585.8 557.2L596.6 583.4L608.9 608.0L633.6 632.7L655.2 638.0L706.4 674.8L759.2 684.4L799.2 676.4" stroke="#111" stroke-width="1.1" fill="none" />
<path d="M652.0 474.0L635.0 483.2L621.2 489.4L604.3 518.6L601.2 543.3L602.7 560.3L616.6 598.8L635.0 623.5L655.0 639.8L744.8 655.6L792.8 652.4" stroke="#111" stroke-width="1.1" fill="none" />
<path d="M858.6 437.0L881.7 450.8L897.1 469.3L915.6 506.3L926.4 555.6L924.9 561.8L915.6 592.6L897.1 617.3L869.4 639.8L844.0 651.0" stroke="#111" stroke-width="1.1" fill="none" />
<path d="M858.6 472.4L872.5 483.2L884.8 490.9L901.8 515.6L909.5 543.3L911.0 558.7L903.3 581.8L884.8 605.0L857.0 629.6L829.3 639.8" stroke="#111" stroke-width="1.1" fill="none" />
<path d="M612 464.7L621.2 489.4 M585.8 557.2L602.7 560.3 M881.7 450.8L878.6 480 M897.1 469.3L884.8 490.9 M926.4 555.6L911 558.7 M706.4 674.8L700 660" stroke="#111" stroke-width="1" fill="none" />
<path d="M636 636.4 L639 634.8 L693.6 649.2 L688.8 660.4 Z" stroke="#111" stroke-width="1" fill="none" />
<path d="M620 618.8 L648.8 641.2 L757.6 666.8 L799.2 665.2" stroke="#111" stroke-width="1" fill="none" />
<path d="M759.2 684.4V666" stroke="#111" stroke-width="0.9" fill="none" />
<path d="M799 662 L850 645 L912.8 609.6 L914.4 614 L852 652 L805 670" stroke="#111" stroke-width="1.1" fill="none" />
<path d="M792.8 652.4 L829.3 639.8" stroke="#111" stroke-width="1" fill="none" />
<path d="M795.4 649.2L813.6 642.8L824.8 670.0L804.0 678.0Z" stroke="#111" stroke-width="1.2" fill="none" />
<path d="M820.0 641.2L844.0 636.4L850.4 663.6L828.0 671.6Z" stroke="#111" stroke-width="1.2" fill="none" />
<path d="M812 645 L809 665 M806 676 L822 669" stroke="#111" stroke-width="0.9" fill="none" />
</g></svg>
</svg>
</div></body></html>
